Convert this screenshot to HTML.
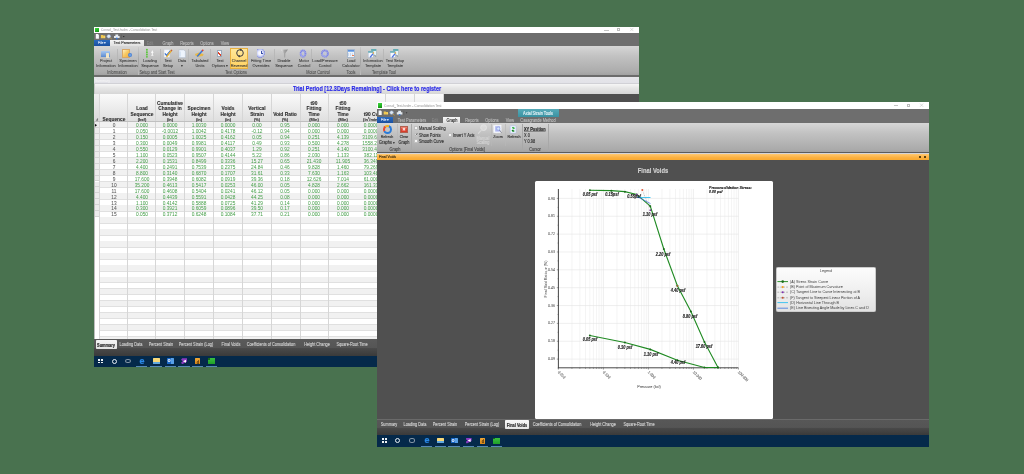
<!DOCTYPE html>
<html><head><meta charset="utf-8">
<style>
*{margin:0;padding:0;box-sizing:border-box}
html,body{width:1024px;height:474px;overflow:hidden;background:#49724f;font-family:"Liberation Sans",sans-serif}
.a{position:absolute}
.t{position:absolute;white-space:nowrap;line-height:1;transform-origin:0 0}
#root{position:absolute;left:0;top:0;width:1024px;height:474px;will-change:transform}
svg{position:absolute;left:0;top:0;overflow:visible}
</style></head><body><div id="root">
<div class="a" style="left:94.00px;top:27.00px;width:545.00px;height:340.00px;background:#4f4f4f"></div>
<div class="a" style="left:94.00px;top:27.00px;width:545.00px;height:6.00px;background:#fff"></div>
<div class="a" style="left:94.60px;top:27.70px;width:4.40px;height:4.40px;background:linear-gradient(160deg,#40d840,#20b020 60%,#108010)"></div>
<div class="t" style="left:100.60px;top:30.10px;font-size:9.75px;color:#a4a4a4;font-weight:normal;transform:scale(0.3333,0.3833) translate(0,-50%);-webkit-text-stroke:0.12px #a4a4a4;">Consol_Test.hvdm - Consolidation Test</div>
<div class="a" style="left:604.00px;top:29.50px;width:4.50px;height:0.40px;background:#c4c4c4"></div>
<div class="a" style="left:616.80px;top:28.00px;width:3.20px;height:3.20px;border:0.4px solid #bcbcbc"></div>
<svg width="1024" height="474"><path d="M630.2,27.9 L633.4,31.1 M633.4,27.9 L630.2,31.1" stroke="#b4b4b4" stroke-width="0.45"/></svg>
<div class="a" style="left:94.00px;top:33.00px;width:545.00px;height:13.00px;background:#6e6e6e"></div>
<svg width="1024" height="474"><g transform="translate(95.6,34.1)"><path d="M0.2,0 L2.4,0 L3.3,0.9 L3.3,4.6 L0.2,4.6Z" fill="#f6f8fa"/><path d="M5.3,1.0 L7.2,1.0 L7.7,1.5 L9.6,1.5 L9.6,4.2 L5.3,4.2Z" fill="#f0c850"/><path d="M8.6,1.8 L10.0,2.9 L8.6,4.0Z" fill="#f8d870"/><circle cx="13.2" cy="2.2" r="1.9" fill="#dce8f4" stroke="#7c90b8" stroke-width="0.5"/><path d="M14.3,3.4 L16.2,5.0" stroke="#c8a040" stroke-width="0.8"/><path d="M19.8,0.4 L22.6,0.4 L22.6,1.8 L24.0,1.8 L24.0,4.0 L18.4,4.0 L18.4,1.8 L19.8,1.8Z" fill="#e4eaf0"/><circle cx="21.2" cy="4.4" r="0.9" fill="#3a7ad8"/><rect x="25.3" y="0.3" width="0.5" height="4.5" fill="#555"/><path d="M27.3,2.0 L29.0,2.0 L28.15,3.1Z" fill="#222"/></g></svg>
<div class="a" style="left:94.00px;top:40.00px;width:15.50px;height:6.00px;background:linear-gradient(#2a6ac0,#1a50a0)"></div>
<div class="t" style="left:101.70px;top:43.20px;font-size:10.20px;color:#e8f0ff;font-weight:normal;transform:scale(0.3333,0.3833) translate(-50%,-50%);-webkit-text-stroke:0.15px #e8f0ff;">File &#9662;</div>
<div class="a" style="left:110.00px;top:40.40px;width:33.80px;height:5.60px;background:linear-gradient(#f4f4f4,#e0e0e0)"></div>
<div class="t" style="left:127.00px;top:43.30px;font-size:11.10px;color:#333;font-weight:normal;transform:scale(0.3333,0.3833) translate(-50%,-50%);-webkit-text-stroke:0.35px #333;">Test Parameters</div>
<div class="t" style="left:150.00px;top:43.30px;font-size:11.70px;color:#8a8a8a;font-weight:normal;transform:scale(0.3333,0.3833) translate(-50%,-50%);-webkit-text-stroke:0.15px #8a8a8a;">Edit</div>
<div class="t" style="left:167.50px;top:43.30px;font-size:11.70px;color:#c4c4c4;font-weight:normal;transform:scale(0.3333,0.3833) translate(-50%,-50%);-webkit-text-stroke:0.15px #c4c4c4;">Graph</div>
<div class="t" style="left:186.50px;top:43.30px;font-size:11.70px;color:#c4c4c4;font-weight:normal;transform:scale(0.3333,0.3833) translate(-50%,-50%);-webkit-text-stroke:0.15px #c4c4c4;">Reports</div>
<div class="t" style="left:206.50px;top:43.30px;font-size:11.70px;color:#c4c4c4;font-weight:normal;transform:scale(0.3333,0.3833) translate(-50%,-50%);-webkit-text-stroke:0.15px #c4c4c4;">Options</div>
<div class="t" style="left:225.00px;top:43.30px;font-size:11.70px;color:#c4c4c4;font-weight:normal;transform:scale(0.3333,0.3833) translate(-50%,-50%);-webkit-text-stroke:0.15px #c4c4c4;">View</div>
<div class="a" style="left:94.00px;top:46.00px;width:545.00px;height:29.00px;background:linear-gradient(#d6d6d6,#c2c2c2 35%,#ababab 90%,#a2a2a2)"></div>
<div class="a" style="left:94.00px;top:75.00px;width:545.00px;height:2.00px;background:#6c6c6c"></div>
<div class="a" style="left:230.00px;top:47.70px;width:18.30px;height:21.20px;background:linear-gradient(#ffe89a,#ffd060);border:0.5px solid #e8b040"></div>
<div class="a" style="left:100.80px;top:50.90px;width:9.30px;height:5.70px;background:linear-gradient(#a8c8f0,#5a8ad0);border-radius:0.5px"></div>
<div class="a" style="left:105.91px;top:53.09px;width:2.79px;height:4.51px;background:#f0e6c8;border-radius:0.5px"></div>
<div class="t" style="left:105.50px;top:61.20px;font-size:11.70px;color:#383838;font-weight:normal;transform:scale(0.3333,0.3600) translate(-50%,-50%);-webkit-text-stroke:0.2px #383838;">Project</div>
<div class="t" style="left:105.50px;top:65.70px;font-size:11.70px;color:#383838;font-weight:normal;transform:scale(0.3333,0.3600) translate(-50%,-50%);-webkit-text-stroke:0.2px #383838;">Information</div>
<div class="a" style="left:122.30px;top:49.40px;width:8.20px;height:8.20px;background:linear-gradient(135deg,#fff0c0,#f8c860 50%,#f0b048);border:0.4px solid #d8a868"></div>
<div class="a" style="left:128.00px;top:53.10px;width:4.00px;height:4.00px;background:radial-gradient(#80b0f0,#2060c0);border-radius:50%"></div>
<div class="t" style="left:127.50px;top:61.20px;font-size:11.70px;color:#383838;font-weight:normal;transform:scale(0.3333,0.3600) translate(-50%,-50%);-webkit-text-stroke:0.2px #383838;">Specimen</div>
<div class="t" style="left:127.50px;top:65.70px;font-size:11.70px;color:#383838;font-weight:normal;transform:scale(0.3333,0.3600) translate(-50%,-50%);-webkit-text-stroke:0.2px #383838;">Information</div>
<svg width="1024" height="474"><path d="M146.90,49.80 V56.90" stroke="#a0b0a0" stroke-width="0.4"/><circle cx="146.90" cy="49.80" r="0.95" fill="#58c838"/><circle cx="146.90" cy="52.15" r="0.95" fill="#58c838"/><circle cx="146.90" cy="54.50" r="0.95" fill="#58c838"/><circle cx="146.90" cy="56.85" r="0.95" fill="#58c838"/><path d="M152.30,50.00 L153.60,53.00 L152.80,53.00 L152.80,55.00 L153.90,55.80 L150.70,55.80 L151.80,55.00 L151.80,53.00 L151.00,53.00Z" fill="#fafafa"/></svg>
<div class="t" style="left:150.00px;top:61.20px;font-size:11.70px;color:#383838;font-weight:normal;transform:scale(0.3333,0.3600) translate(-50%,-50%);-webkit-text-stroke:0.2px #383838;">Loading</div>
<div class="t" style="left:150.00px;top:65.70px;font-size:11.70px;color:#383838;font-weight:normal;transform:scale(0.3333,0.3600) translate(-50%,-50%);-webkit-text-stroke:0.2px #383838;">Sequence</div>
<svg width="1024" height="474"><path d="M164.10,49.70 H169.70 V57.20 H164.10Z" fill="#f8fafc" stroke="#c8d0e0" stroke-width="0.3"/><path d="M164.90,53.40 L166.50,55.40 L170.10,51.00" fill="none" stroke="#2a68d0" stroke-width="1.1"/><path d="M171.90,50.00 L166.50,57.00" stroke="#e8b030" stroke-width="1.3"/><path d="M171.90,50.00 L170.90,51.00" stroke="#c06040" stroke-width="1.3"/></svg>
<div class="t" style="left:168.00px;top:61.20px;font-size:11.70px;color:#383838;font-weight:normal;transform:scale(0.3333,0.3600) translate(-50%,-50%);-webkit-text-stroke:0.2px #383838;">Test</div>
<div class="t" style="left:168.00px;top:65.70px;font-size:11.70px;color:#383838;font-weight:normal;transform:scale(0.3333,0.3600) translate(-50%,-50%);-webkit-text-stroke:0.2px #383838;">Setup</div>
<svg width="1024" height="474"><path d="M179.00,49.90 H183.80 L185.40,51.40 V57.60 H179.00Z" fill="#eef4fc" stroke="#a8b8d0" stroke-width="0.4"/><path d="M180.00,51.40 V56.60" stroke="#c8d8ec" stroke-width="1.2"/></svg>
<div class="t" style="left:182.00px;top:61.20px;font-size:11.70px;color:#383838;font-weight:normal;transform:scale(0.3333,0.3600) translate(-50%,-50%);-webkit-text-stroke:0.2px #383838;">Data</div>
<div class="t" style="left:182.00px;top:65.70px;font-size:11.70px;color:#383838;font-weight:normal;transform:scale(0.3333,0.3600) translate(-50%,-50%);-webkit-text-stroke:0.2px #383838;">&#9662;</div>
<svg width="1024" height="474"><path d="M195.00,53.90 L199.00,52.60 L203.70,54.20 L202.70,56.00 L198.00,56.80 L195.40,55.60Z" fill="#e8b848"/><path d="M197.20,56.40 L202.50,50.60" stroke="#3a78d8" stroke-width="1.5"/><path d="M202.10,51.00 L203.30,49.80" stroke="#e04030" stroke-width="1.5"/></svg>
<div class="t" style="left:199.50px;top:61.20px;font-size:11.70px;color:#383838;font-weight:normal;transform:scale(0.3333,0.3600) translate(-50%,-50%);-webkit-text-stroke:0.2px #383838;">Tabulated</div>
<div class="t" style="left:199.50px;top:65.70px;font-size:11.70px;color:#383838;font-weight:normal;transform:scale(0.3333,0.3600) translate(-50%,-50%);-webkit-text-stroke:0.2px #383838;">Units</div>
<div class="a" style="left:216.80px;top:49.90px;width:5.70px;height:7.20px;background:#f8f8ff;border:0.4px solid #9ab"></div>
<div class="a" style="left:218.30px;top:51.90px;width:3.20px;height:4.20px;background:linear-gradient(225deg,transparent 35%,#e04020 40%,#e04020 60%,transparent 65%)"></div>
<div class="t" style="left:219.50px;top:61.20px;font-size:11.70px;color:#383838;font-weight:normal;transform:scale(0.3333,0.3600) translate(-50%,-50%);-webkit-text-stroke:0.2px #383838;">Test</div>
<div class="t" style="left:219.50px;top:65.70px;font-size:11.70px;color:#383838;font-weight:normal;transform:scale(0.3333,0.3600) translate(-50%,-50%);-webkit-text-stroke:0.2px #383838;">Options &#9662;</div>
<svg width="1024" height="474"><circle cx="240.00" cy="53.00" r="3.3" fill="none" stroke="#30303a" stroke-width="0.95"/><path d="M240.30,48.50 L242.00,49.70 L240.30,50.90Z M239.70,57.50 L238.00,56.30 L239.70,55.10Z" fill="#30303a"/></svg>
<div class="t" style="left:239.00px;top:61.20px;font-size:11.70px;color:#383838;font-weight:normal;transform:scale(0.3333,0.3600) translate(-50%,-50%);-webkit-text-stroke:0.2px #383838;">Channel</div>
<div class="t" style="left:239.00px;top:65.70px;font-size:11.70px;color:#383838;font-weight:normal;transform:scale(0.3333,0.3600) translate(-50%,-50%);-webkit-text-stroke:0.2px #383838;">Reversed</div>
<div class="a" style="left:256.70px;top:48.90px;width:8.60px;height:9.00px;background:radial-gradient(circle at 40% 45%,#ffffff 0%,#eef0ff 30%,#b8c0f0 55%,#8890d8 68%,transparent 71%)"></div>
<div class="a" style="left:260.80px;top:50.60px;width:0.70px;height:3.20px;background:#3a50a8"></div>
<div class="a" style="left:260.80px;top:53.20px;width:2.40px;height:0.70px;background:#3a50a8"></div>
<div class="t" style="left:261.00px;top:61.20px;font-size:11.70px;color:#383838;font-weight:normal;transform:scale(0.3333,0.3600) translate(-50%,-50%);-webkit-text-stroke:0.2px #383838;">Fitting Time</div>
<div class="t" style="left:261.00px;top:65.70px;font-size:11.70px;color:#383838;font-weight:normal;transform:scale(0.3333,0.3600) translate(-50%,-50%);-webkit-text-stroke:0.2px #383838;">Overrides</div>
<div class="a" style="left:281.00px;top:49.40px;width:7.00px;height:8.20px;background:linear-gradient(90deg,#f4f4f4,#a8a8a8 45%,#888 100%);clip-path:polygon(0 5%,100% 0,62% 48%,60% 100%,42% 100%,40% 48%)"></div>
<div class="t" style="left:284.00px;top:61.20px;font-size:11.70px;color:#383838;font-weight:normal;transform:scale(0.3333,0.3600) translate(-50%,-50%);-webkit-text-stroke:0.2px #383838;">Disable</div>
<div class="t" style="left:284.00px;top:65.70px;font-size:11.70px;color:#383838;font-weight:normal;transform:scale(0.3333,0.3600) translate(-50%,-50%);-webkit-text-stroke:0.2px #383838;">Sequence</div>
<svg width="1024" height="474"><ellipse cx="303.05" cy="53.50" rx="2.35" ry="3.10" fill="none" stroke="#7c84ec" stroke-width="2.0" stroke-dasharray="1.1,0.35"/><ellipse cx="302.55" cy="54.30" rx="1.6" ry="2.2" fill="none" stroke="#b8c4ff" stroke-width="0.6" opacity="0.8"/></svg>
<div class="t" style="left:303.50px;top:61.20px;font-size:11.70px;color:#383838;font-weight:normal;transform:scale(0.3333,0.3600) translate(-50%,-50%);-webkit-text-stroke:0.2px #383838;">Motor</div>
<div class="t" style="left:303.50px;top:65.70px;font-size:11.70px;color:#383838;font-weight:normal;transform:scale(0.3333,0.3600) translate(-50%,-50%);-webkit-text-stroke:0.2px #383838;">Control</div>
<svg width="1024" height="474"><ellipse cx="324.90" cy="53.50" rx="3.00" ry="3.10" fill="none" stroke="#7c84ec" stroke-width="2.0" stroke-dasharray="1.1,0.35"/><ellipse cx="324.40" cy="54.30" rx="1.6" ry="2.2" fill="none" stroke="#b8c4ff" stroke-width="0.6" opacity="0.8"/></svg>
<div class="t" style="left:325.00px;top:61.20px;font-size:11.70px;color:#383838;font-weight:normal;transform:scale(0.3333,0.3600) translate(-50%,-50%);-webkit-text-stroke:0.2px #383838;">Load/Pressure</div>
<div class="t" style="left:325.00px;top:65.70px;font-size:11.70px;color:#383838;font-weight:normal;transform:scale(0.3333,0.3600) translate(-50%,-50%);-webkit-text-stroke:0.2px #383838;">Control</div>
<div class="a" style="left:346.50px;top:49.40px;width:8.00px;height:8.20px;background:linear-gradient(#4a80d8 0,#8ab8f0 24%,#eef2f8 25%);border:0.4px solid #a8b8cc;border-radius:0.6px"></div>
<div class="a" style="left:348.00px;top:52.90px;width:5.00px;height:3.20px;background:repeating-linear-gradient(90deg,#c8d8f0 0 1px,transparent 1px 2px)"></div>
<div class="a" style="left:352.00px;top:54.60px;width:1.50px;height:1.50px;background:#f08050"></div>
<div class="t" style="left:350.50px;top:61.20px;font-size:11.70px;color:#383838;font-weight:normal;transform:scale(0.3333,0.3600) translate(-50%,-50%);-webkit-text-stroke:0.2px #383838;">Load</div>
<div class="t" style="left:350.50px;top:65.70px;font-size:11.70px;color:#383838;font-weight:normal;transform:scale(0.3333,0.3600) translate(-50%,-50%);-webkit-text-stroke:0.2px #383838;">Calculator</div>
<svg width="1024" height="474"><rect x="371.20" y="49.20" width="5" height="6" fill="#e8f4f4" stroke="#80a8b0" stroke-width="0.3"/><rect x="371.20" y="49.20" width="5" height="1.6" fill="#4aa0a8"/><rect x="368.20" y="51.20" width="5" height="6.2" fill="#f4f8ff" stroke="#90a0c0" stroke-width="0.3"/><rect x="368.20" y="51.20" width="5" height="1.5" fill="#5aa8b0"/><path d="M369.60,57.00 L372.60,53.20 L373.60,54.00 L370.60,57.80Z" fill="#4a70e0"/><circle cx="373.40" cy="53.00" r="0.8" fill="#f0a020"/><path d="M374.00,54.40 L376.00,56.90" stroke="#607080" stroke-width="0.5"/></svg>
<div class="t" style="left:372.50px;top:61.20px;font-size:11.70px;color:#383838;font-weight:normal;transform:scale(0.3333,0.3600) translate(-50%,-50%);-webkit-text-stroke:0.2px #383838;">Information</div>
<div class="t" style="left:372.50px;top:65.70px;font-size:11.70px;color:#383838;font-weight:normal;transform:scale(0.3333,0.3600) translate(-50%,-50%);-webkit-text-stroke:0.2px #383838;">Template</div>
<svg width="1024" height="474"><rect x="393.20" y="49.20" width="5" height="6" fill="#e8f4f4" stroke="#80a8b0" stroke-width="0.3"/><rect x="393.20" y="49.20" width="5" height="1.6" fill="#4aa0a8"/><rect x="390.20" y="51.20" width="5" height="6.2" fill="#f4f8ff" stroke="#90a0c0" stroke-width="0.3"/><rect x="390.20" y="51.20" width="5" height="1.5" fill="#5aa8b0"/><path d="M391.60,57.00 L394.60,53.20 L395.60,54.00 L392.60,57.80Z" fill="#4a70e0"/><circle cx="395.40" cy="53.00" r="0.8" fill="#f0a020"/><path d="M396.00,54.40 L398.00,56.90" stroke="#607080" stroke-width="0.5"/></svg>
<div class="t" style="left:394.50px;top:61.20px;font-size:11.70px;color:#383838;font-weight:normal;transform:scale(0.3333,0.3600) translate(-50%,-50%);-webkit-text-stroke:0.2px #383838;">Test Setup</div>
<div class="t" style="left:394.50px;top:65.70px;font-size:11.70px;color:#383838;font-weight:normal;transform:scale(0.3333,0.3600) translate(-50%,-50%);-webkit-text-stroke:0.2px #383838;">Template</div>
<div class="a" style="left:138.40px;top:47.00px;width:0.60px;height:27.50px;background:linear-gradient(#c8c8c8,#a0a0a0 50%,#c0c0c0);opacity:0.9"></div>
<div class="a" style="left:174.60px;top:47.00px;width:0.60px;height:27.50px;background:linear-gradient(#c8c8c8,#a0a0a0 50%,#c0c0c0);opacity:0.9"></div>
<div class="a" style="left:294.50px;top:47.00px;width:0.60px;height:27.50px;background:linear-gradient(#c8c8c8,#a0a0a0 50%,#c0c0c0);opacity:0.9"></div>
<div class="a" style="left:339.70px;top:47.00px;width:0.60px;height:27.50px;background:linear-gradient(#c8c8c8,#a0a0a0 50%,#c0c0c0);opacity:0.9"></div>
<div class="a" style="left:360.20px;top:47.00px;width:0.60px;height:27.50px;background:linear-gradient(#c8c8c8,#a0a0a0 50%,#c0c0c0);opacity:0.9"></div>
<div class="a" style="left:405.90px;top:47.00px;width:0.60px;height:27.50px;background:linear-gradient(#c8c8c8,#a0a0a0 50%,#c0c0c0);opacity:0.9"></div>
<div class="a" style="left:116.50px;top:48.50px;width:0.50px;height:19.50px;background:#b4b4b4;opacity:0.8"></div>
<div class="a" style="left:160.40px;top:48.50px;width:0.50px;height:19.50px;background:#b4b4b4;opacity:0.8"></div>
<div class="a" style="left:188.20px;top:48.50px;width:0.50px;height:19.50px;background:#b4b4b4;opacity:0.8"></div>
<div class="a" style="left:210.00px;top:48.50px;width:0.50px;height:19.50px;background:#b4b4b4;opacity:0.8"></div>
<div class="a" style="left:273.50px;top:48.50px;width:0.50px;height:19.50px;background:#b4b4b4;opacity:0.8"></div>
<div class="a" style="left:310.60px;top:48.50px;width:0.50px;height:19.50px;background:#b4b4b4;opacity:0.8"></div>
<div class="a" style="left:383.40px;top:48.50px;width:0.50px;height:19.50px;background:#b4b4b4;opacity:0.8"></div>
<div class="t" style="left:116.50px;top:72.00px;font-size:11.70px;color:#4e4e4e;font-weight:normal;transform:scale(0.3333,0.3833) translate(-50%,-50%);-webkit-text-stroke:0.15px #4e4e4e;">Information</div>
<div class="t" style="left:157.00px;top:72.00px;font-size:11.70px;color:#4e4e4e;font-weight:normal;transform:scale(0.3333,0.3833) translate(-50%,-50%);-webkit-text-stroke:0.15px #4e4e4e;">Setup and Start Test</div>
<div class="t" style="left:235.50px;top:72.00px;font-size:11.70px;color:#4e4e4e;font-weight:normal;transform:scale(0.3333,0.3833) translate(-50%,-50%);-webkit-text-stroke:0.15px #4e4e4e;">Test Options</div>
<div class="t" style="left:317.50px;top:72.00px;font-size:11.70px;color:#4e4e4e;font-weight:normal;transform:scale(0.3333,0.3833) translate(-50%,-50%);-webkit-text-stroke:0.15px #4e4e4e;">Motor Control</div>
<div class="t" style="left:350.50px;top:72.00px;font-size:11.70px;color:#4e4e4e;font-weight:normal;transform:scale(0.3333,0.3833) translate(-50%,-50%);-webkit-text-stroke:0.15px #4e4e4e;">Tools</div>
<div class="t" style="left:384.00px;top:72.00px;font-size:11.70px;color:#4e4e4e;font-weight:normal;transform:scale(0.3333,0.3833) translate(-50%,-50%);-webkit-text-stroke:0.15px #4e4e4e;">Template Tool</div>
<div class="a" style="left:94.00px;top:77.00px;width:545.00px;height:6.80px;background:linear-gradient(#e6e6ea,#e2e2e8 80%,#c8c8cc)"></div>
<div class="t" style="left:95.30px;top:80.60px;font-size:10.50px;color:#f8f8f8;font-weight:normal;transform:scale(0.3333,0.3833) translate(0,-50%);">Summary</div>
<div class="a" style="left:94.00px;top:83.80px;width:545.00px;height:10.20px;background:linear-gradient(#f6f6f6,#e6e6e6 40%,#d6d6d6);border-left:1px solid #c8c8c8"></div>
<div class="t" style="left:367.00px;top:89.20px;font-size:16.50px;color:#2626e8;font-weight:bold;transform:scale(0.3333,0.3833) translate(-50%,-50%);-webkit-text-stroke:0.35px #2626e8;">Trial Period [12.3Days Remaining] - Click here to register</div>
<div class="a" style="left:443.00px;top:94.00px;width:196.00px;height:245.40px;background:#4f4f4f"></div>
<div class="a" style="left:94.00px;top:94.00px;width:349.00px;height:245.40px;background:#fff"></div>
<div class="a" style="left:94.00px;top:94.00px;width:349.00px;height:27.80px;background:linear-gradient(#fafafa,#ececec 50%,#dedede)"></div>
<div class="a" style="left:94.00px;top:94.00px;width:5.50px;height:27.80px;background:linear-gradient(#f0f0f0,#d8d8d8)"></div>
<div class="a" style="left:99.50px;top:121.80px;width:343.50px;height:5.97px;background:#f1f1f1"></div>
<div class="a" style="left:99.50px;top:127.27px;width:343.50px;height:0.50px;background:#e0e0e0"></div>
<div class="a" style="left:94.00px;top:121.80px;width:5.50px;height:5.97px;background:#ececec;border-bottom:0.5px solid #d4d4d4"></div>
<div class="a" style="left:99.50px;top:133.24px;width:343.50px;height:0.50px;background:#e0e0e0"></div>
<div class="a" style="left:94.00px;top:127.77px;width:5.50px;height:5.97px;background:#ececec;border-bottom:0.5px solid #d4d4d4"></div>
<div class="a" style="left:99.50px;top:133.74px;width:343.50px;height:5.97px;background:#f1f1f1"></div>
<div class="a" style="left:99.50px;top:139.21px;width:343.50px;height:0.50px;background:#e0e0e0"></div>
<div class="a" style="left:94.00px;top:133.74px;width:5.50px;height:5.97px;background:#ececec;border-bottom:0.5px solid #d4d4d4"></div>
<div class="a" style="left:99.50px;top:145.18px;width:343.50px;height:0.50px;background:#e0e0e0"></div>
<div class="a" style="left:94.00px;top:139.71px;width:5.50px;height:5.97px;background:#ececec;border-bottom:0.5px solid #d4d4d4"></div>
<div class="a" style="left:99.50px;top:145.68px;width:343.50px;height:5.97px;background:#f1f1f1"></div>
<div class="a" style="left:99.50px;top:151.15px;width:343.50px;height:0.50px;background:#e0e0e0"></div>
<div class="a" style="left:94.00px;top:145.68px;width:5.50px;height:5.97px;background:#ececec;border-bottom:0.5px solid #d4d4d4"></div>
<div class="a" style="left:99.50px;top:157.12px;width:343.50px;height:0.50px;background:#e0e0e0"></div>
<div class="a" style="left:94.00px;top:151.65px;width:5.50px;height:5.97px;background:#ececec;border-bottom:0.5px solid #d4d4d4"></div>
<div class="a" style="left:99.50px;top:157.62px;width:343.50px;height:5.97px;background:#f1f1f1"></div>
<div class="a" style="left:99.50px;top:163.09px;width:343.50px;height:0.50px;background:#e0e0e0"></div>
<div class="a" style="left:94.00px;top:157.62px;width:5.50px;height:5.97px;background:#ececec;border-bottom:0.5px solid #d4d4d4"></div>
<div class="a" style="left:99.50px;top:169.06px;width:343.50px;height:0.50px;background:#e0e0e0"></div>
<div class="a" style="left:94.00px;top:163.59px;width:5.50px;height:5.97px;background:#ececec;border-bottom:0.5px solid #d4d4d4"></div>
<div class="a" style="left:99.50px;top:169.56px;width:343.50px;height:5.97px;background:#f1f1f1"></div>
<div class="a" style="left:99.50px;top:175.03px;width:343.50px;height:0.50px;background:#e0e0e0"></div>
<div class="a" style="left:94.00px;top:169.56px;width:5.50px;height:5.97px;background:#ececec;border-bottom:0.5px solid #d4d4d4"></div>
<div class="a" style="left:99.50px;top:181.00px;width:343.50px;height:0.50px;background:#e0e0e0"></div>
<div class="a" style="left:94.00px;top:175.53px;width:5.50px;height:5.97px;background:#ececec;border-bottom:0.5px solid #d4d4d4"></div>
<div class="a" style="left:99.50px;top:181.50px;width:343.50px;height:5.97px;background:#f1f1f1"></div>
<div class="a" style="left:99.50px;top:186.97px;width:343.50px;height:0.50px;background:#e0e0e0"></div>
<div class="a" style="left:94.00px;top:181.50px;width:5.50px;height:5.97px;background:#ececec;border-bottom:0.5px solid #d4d4d4"></div>
<div class="a" style="left:99.50px;top:192.94px;width:343.50px;height:0.50px;background:#e0e0e0"></div>
<div class="a" style="left:94.00px;top:187.47px;width:5.50px;height:5.97px;background:#ececec;border-bottom:0.5px solid #d4d4d4"></div>
<div class="a" style="left:99.50px;top:193.44px;width:343.50px;height:5.97px;background:#f1f1f1"></div>
<div class="a" style="left:99.50px;top:198.91px;width:343.50px;height:0.50px;background:#e0e0e0"></div>
<div class="a" style="left:94.00px;top:193.44px;width:5.50px;height:5.97px;background:#ececec;border-bottom:0.5px solid #d4d4d4"></div>
<div class="a" style="left:99.50px;top:204.88px;width:343.50px;height:0.50px;background:#e0e0e0"></div>
<div class="a" style="left:94.00px;top:199.41px;width:5.50px;height:5.97px;background:#ececec;border-bottom:0.5px solid #d4d4d4"></div>
<div class="a" style="left:99.50px;top:205.38px;width:343.50px;height:5.97px;background:#f1f1f1"></div>
<div class="a" style="left:99.50px;top:210.85px;width:343.50px;height:0.50px;background:#e0e0e0"></div>
<div class="a" style="left:94.00px;top:205.38px;width:5.50px;height:5.97px;background:#ececec;border-bottom:0.5px solid #d4d4d4"></div>
<div class="a" style="left:99.50px;top:216.82px;width:343.50px;height:0.50px;background:#e0e0e0"></div>
<div class="a" style="left:94.00px;top:211.35px;width:5.50px;height:5.97px;background:#ececec;border-bottom:0.5px solid #d4d4d4"></div>
<div class="a" style="left:99.50px;top:217.32px;width:343.50px;height:5.97px;background:#f1f1f1"></div>
<div class="a" style="left:99.50px;top:222.79px;width:343.50px;height:0.50px;background:#e0e0e0"></div>
<div class="a" style="left:99.50px;top:228.76px;width:343.50px;height:0.50px;background:#e0e0e0"></div>
<div class="a" style="left:99.50px;top:229.26px;width:343.50px;height:5.97px;background:#f1f1f1"></div>
<div class="a" style="left:99.50px;top:234.73px;width:343.50px;height:0.50px;background:#e0e0e0"></div>
<div class="a" style="left:99.50px;top:240.70px;width:343.50px;height:0.50px;background:#e0e0e0"></div>
<div class="a" style="left:99.50px;top:241.20px;width:343.50px;height:5.97px;background:#f1f1f1"></div>
<div class="a" style="left:99.50px;top:246.67px;width:343.50px;height:0.50px;background:#e0e0e0"></div>
<div class="a" style="left:99.50px;top:252.64px;width:343.50px;height:0.50px;background:#e0e0e0"></div>
<div class="a" style="left:99.50px;top:253.14px;width:343.50px;height:5.97px;background:#f1f1f1"></div>
<div class="a" style="left:99.50px;top:258.61px;width:343.50px;height:0.50px;background:#e0e0e0"></div>
<div class="a" style="left:99.50px;top:264.58px;width:343.50px;height:0.50px;background:#e0e0e0"></div>
<div class="a" style="left:99.50px;top:265.08px;width:343.50px;height:5.97px;background:#f1f1f1"></div>
<div class="a" style="left:99.50px;top:270.55px;width:343.50px;height:0.50px;background:#e0e0e0"></div>
<div class="a" style="left:99.50px;top:276.52px;width:343.50px;height:0.50px;background:#e0e0e0"></div>
<div class="a" style="left:99.50px;top:277.02px;width:343.50px;height:5.97px;background:#f1f1f1"></div>
<div class="a" style="left:99.50px;top:282.49px;width:343.50px;height:0.50px;background:#e0e0e0"></div>
<div class="a" style="left:99.50px;top:288.46px;width:343.50px;height:0.50px;background:#e0e0e0"></div>
<div class="a" style="left:99.50px;top:288.96px;width:343.50px;height:5.97px;background:#f1f1f1"></div>
<div class="a" style="left:99.50px;top:294.43px;width:343.50px;height:0.50px;background:#e0e0e0"></div>
<div class="a" style="left:99.50px;top:300.40px;width:343.50px;height:0.50px;background:#e0e0e0"></div>
<div class="a" style="left:99.50px;top:300.90px;width:343.50px;height:5.97px;background:#f1f1f1"></div>
<div class="a" style="left:99.50px;top:306.37px;width:343.50px;height:0.50px;background:#e0e0e0"></div>
<div class="a" style="left:99.50px;top:312.34px;width:343.50px;height:0.50px;background:#e0e0e0"></div>
<div class="a" style="left:99.50px;top:312.84px;width:343.50px;height:5.97px;background:#f1f1f1"></div>
<div class="a" style="left:99.50px;top:318.31px;width:343.50px;height:0.50px;background:#e0e0e0"></div>
<div class="a" style="left:99.50px;top:324.28px;width:343.50px;height:0.50px;background:#e0e0e0"></div>
<div class="a" style="left:99.50px;top:324.78px;width:343.50px;height:5.97px;background:#f1f1f1"></div>
<div class="a" style="left:99.50px;top:330.25px;width:343.50px;height:0.50px;background:#e0e0e0"></div>
<div class="a" style="left:99.50px;top:336.22px;width:343.50px;height:0.50px;background:#e0e0e0"></div>
<div class="a" style="left:99.50px;top:336.72px;width:343.50px;height:2.68px;background:#f1f1f1"></div>
<div class="a" style="left:99.50px;top:338.90px;width:343.50px;height:0.50px;background:#e0e0e0"></div>
<div class="a" style="left:94.00px;top:121.80px;width:1.00px;height:217.60px;background:#bdbdbd"></div>
<div class="a" style="left:99.20px;top:94.00px;width:0.60px;height:245.40px;background:#d6d6d6"></div>
<div class="a" style="left:127.20px;top:94.00px;width:0.60px;height:245.40px;background:#d6d6d6"></div>
<div class="a" style="left:155.20px;top:94.00px;width:0.60px;height:245.40px;background:#d6d6d6"></div>
<div class="a" style="left:184.20px;top:94.00px;width:0.60px;height:245.40px;background:#d6d6d6"></div>
<div class="a" style="left:213.20px;top:94.00px;width:0.60px;height:245.40px;background:#d6d6d6"></div>
<div class="a" style="left:242.20px;top:94.00px;width:0.60px;height:245.40px;background:#d6d6d6"></div>
<div class="a" style="left:270.50px;top:94.00px;width:0.60px;height:245.40px;background:#d6d6d6"></div>
<div class="a" style="left:299.60px;top:94.00px;width:0.60px;height:245.40px;background:#d6d6d6"></div>
<div class="a" style="left:328.30px;top:94.00px;width:0.60px;height:245.40px;background:#d6d6d6"></div>
<div class="a" style="left:385.30px;top:94.00px;width:0.60px;height:245.40px;background:#d6d6d6"></div>
<div class="a" style="left:413.60px;top:94.00px;width:0.60px;height:245.40px;background:#d6d6d6"></div>
<div class="a" style="left:442.70px;top:94.00px;width:0.60px;height:245.40px;background:#d6d6d6"></div>
<div class="a" style="left:94.00px;top:121.40px;width:349.00px;height:0.80px;background:#c0c0c0"></div>
<div class="t" style="left:113.50px;top:119.00px;font-size:14.55px;color:#2e2e2e;font-weight:bold;transform:scale(0.3333,0.3600) translate(-50%,-50%);-webkit-text-stroke:0.3px #2e2e2e;">Sequence</div>
<div class="t" style="left:141.50px;top:108.40px;font-size:14.55px;color:#2e2e2e;font-weight:bold;transform:scale(0.3333,0.3600) translate(-50%,-50%);-webkit-text-stroke:0.3px #2e2e2e;">Load</div>
<div class="t" style="left:141.50px;top:113.70px;font-size:14.55px;color:#2e2e2e;font-weight:bold;transform:scale(0.3333,0.3600) translate(-50%,-50%);-webkit-text-stroke:0.3px #2e2e2e;">Sequence</div>
<div class="t" style="left:141.50px;top:119.50px;font-size:12.00px;color:#2e2e2e;font-weight:bold;transform:scale(0.3333,0.3333) translate(-50%,-50%);-webkit-text-stroke:0.25px #2e2e2e;">(ksf)</div>
<div class="t" style="left:170.00px;top:103.10px;font-size:14.55px;color:#2e2e2e;font-weight:bold;transform:scale(0.3333,0.3600) translate(-50%,-50%);-webkit-text-stroke:0.3px #2e2e2e;">Cumulative</div>
<div class="t" style="left:170.00px;top:108.40px;font-size:14.55px;color:#2e2e2e;font-weight:bold;transform:scale(0.3333,0.3600) translate(-50%,-50%);-webkit-text-stroke:0.3px #2e2e2e;">Change in</div>
<div class="t" style="left:170.00px;top:113.70px;font-size:14.55px;color:#2e2e2e;font-weight:bold;transform:scale(0.3333,0.3600) translate(-50%,-50%);-webkit-text-stroke:0.3px #2e2e2e;">Height</div>
<div class="t" style="left:170.00px;top:119.50px;font-size:12.00px;color:#2e2e2e;font-weight:bold;transform:scale(0.3333,0.3333) translate(-50%,-50%);-webkit-text-stroke:0.25px #2e2e2e;">(in)</div>
<div class="t" style="left:199.00px;top:108.40px;font-size:14.55px;color:#2e2e2e;font-weight:bold;transform:scale(0.3333,0.3600) translate(-50%,-50%);-webkit-text-stroke:0.3px #2e2e2e;">Specimen</div>
<div class="t" style="left:199.00px;top:113.70px;font-size:14.55px;color:#2e2e2e;font-weight:bold;transform:scale(0.3333,0.3600) translate(-50%,-50%);-webkit-text-stroke:0.3px #2e2e2e;">Height</div>
<div class="t" style="left:199.00px;top:119.50px;font-size:12.00px;color:#2e2e2e;font-weight:bold;transform:scale(0.3333,0.3333) translate(-50%,-50%);-webkit-text-stroke:0.25px #2e2e2e;">(in)</div>
<div class="t" style="left:228.00px;top:108.40px;font-size:14.55px;color:#2e2e2e;font-weight:bold;transform:scale(0.3333,0.3600) translate(-50%,-50%);-webkit-text-stroke:0.3px #2e2e2e;">Voids</div>
<div class="t" style="left:228.00px;top:113.70px;font-size:14.55px;color:#2e2e2e;font-weight:bold;transform:scale(0.3333,0.3600) translate(-50%,-50%);-webkit-text-stroke:0.3px #2e2e2e;">Height</div>
<div class="t" style="left:228.00px;top:119.50px;font-size:12.00px;color:#2e2e2e;font-weight:bold;transform:scale(0.3333,0.3333) translate(-50%,-50%);-webkit-text-stroke:0.25px #2e2e2e;">(in)</div>
<div class="t" style="left:256.65px;top:108.40px;font-size:14.55px;color:#2e2e2e;font-weight:bold;transform:scale(0.3333,0.3600) translate(-50%,-50%);-webkit-text-stroke:0.3px #2e2e2e;">Vertical</div>
<div class="t" style="left:256.65px;top:113.70px;font-size:14.55px;color:#2e2e2e;font-weight:bold;transform:scale(0.3333,0.3600) translate(-50%,-50%);-webkit-text-stroke:0.3px #2e2e2e;">Strain</div>
<div class="t" style="left:256.65px;top:119.50px;font-size:12.00px;color:#2e2e2e;font-weight:bold;transform:scale(0.3333,0.3333) translate(-50%,-50%);-webkit-text-stroke:0.25px #2e2e2e;">(%)</div>
<div class="t" style="left:285.35px;top:113.70px;font-size:14.55px;color:#2e2e2e;font-weight:bold;transform:scale(0.3333,0.3600) translate(-50%,-50%);-webkit-text-stroke:0.3px #2e2e2e;">Void Ratio</div>
<div class="t" style="left:285.35px;top:119.50px;font-size:12.00px;color:#2e2e2e;font-weight:bold;transform:scale(0.3333,0.3333) translate(-50%,-50%);-webkit-text-stroke:0.25px #2e2e2e;">(%)</div>
<div class="t" style="left:314.25px;top:103.10px;font-size:14.55px;color:#2e2e2e;font-weight:bold;transform:scale(0.3333,0.3600) translate(-50%,-50%);-webkit-text-stroke:0.3px #2e2e2e;">t90</div>
<div class="t" style="left:314.25px;top:108.40px;font-size:14.55px;color:#2e2e2e;font-weight:bold;transform:scale(0.3333,0.3600) translate(-50%,-50%);-webkit-text-stroke:0.3px #2e2e2e;">Fitting</div>
<div class="t" style="left:314.25px;top:113.70px;font-size:14.55px;color:#2e2e2e;font-weight:bold;transform:scale(0.3333,0.3600) translate(-50%,-50%);-webkit-text-stroke:0.3px #2e2e2e;">Time</div>
<div class="t" style="left:314.25px;top:119.50px;font-size:12.00px;color:#2e2e2e;font-weight:bold;transform:scale(0.3333,0.3333) translate(-50%,-50%);-webkit-text-stroke:0.25px #2e2e2e;">(Min)</div>
<div class="t" style="left:342.80px;top:103.10px;font-size:14.55px;color:#2e2e2e;font-weight:bold;transform:scale(0.3333,0.3600) translate(-50%,-50%);-webkit-text-stroke:0.3px #2e2e2e;">t50</div>
<div class="t" style="left:342.80px;top:108.40px;font-size:14.55px;color:#2e2e2e;font-weight:bold;transform:scale(0.3333,0.3600) translate(-50%,-50%);-webkit-text-stroke:0.3px #2e2e2e;">Fitting</div>
<div class="t" style="left:342.80px;top:113.70px;font-size:14.55px;color:#2e2e2e;font-weight:bold;transform:scale(0.3333,0.3600) translate(-50%,-50%);-webkit-text-stroke:0.3px #2e2e2e;">Time</div>
<div class="t" style="left:342.80px;top:119.50px;font-size:12.00px;color:#2e2e2e;font-weight:bold;transform:scale(0.3333,0.3333) translate(-50%,-50%);-webkit-text-stroke:0.25px #2e2e2e;">(Min)</div>
<div class="t" style="left:371.00px;top:113.70px;font-size:14.55px;color:#2e2e2e;font-weight:bold;transform:scale(0.3333,0.3600) translate(-50%,-50%);-webkit-text-stroke:0.3px #2e2e2e;">t90 Cv</div>
<div class="t" style="left:371.00px;top:119.50px;font-size:12.00px;color:#2e2e2e;font-weight:bold;transform:scale(0.3333,0.3333) translate(-50%,-50%);-webkit-text-stroke:0.25px #2e2e2e;">(in&#178;/min)</div>
<div class="t" style="left:96.60px;top:119.30px;font-size:8.40px;color:#777;font-weight:normal;transform:scale(0.3333,0.3833) translate(-50%,-50%);-webkit-text-stroke:0.35px #777;">&#9698;</div>
<div class="t" style="left:95.60px;top:124.60px;font-size:9.00px;color:#111;font-weight:normal;transform:scale(0.3333,0.3833) translate(-50%,-50%);-webkit-text-stroke:0.35px #111;">&#9654;</div>
<div class="t" style="left:113.50px;top:124.88px;font-size:14.40px;color:#5a5a5a;font-weight:normal;transform:scale(0.3333,0.3533) translate(-50%,-50%);-webkit-text-stroke:0.18px #5a5a5a;">0</div>
<div class="t" style="left:141.50px;top:124.88px;font-size:14.40px;color:#48a04c;font-weight:normal;transform:scale(0.3333,0.3533) translate(-50%,-50%);-webkit-text-stroke:0.04px #48a04c;">0.000</div>
<div class="t" style="left:170.00px;top:124.88px;font-size:14.40px;color:#48a04c;font-weight:normal;transform:scale(0.3333,0.3533) translate(-50%,-50%);-webkit-text-stroke:0.04px #48a04c;">0.0000</div>
<div class="t" style="left:199.00px;top:124.88px;font-size:14.40px;color:#48a04c;font-weight:normal;transform:scale(0.3333,0.3533) translate(-50%,-50%);-webkit-text-stroke:0.04px #48a04c;">1.0030</div>
<div class="t" style="left:228.00px;top:124.88px;font-size:14.40px;color:#48a04c;font-weight:normal;transform:scale(0.3333,0.3533) translate(-50%,-50%);-webkit-text-stroke:0.04px #48a04c;">0.0000</div>
<div class="t" style="left:256.65px;top:124.88px;font-size:14.40px;color:#48a04c;font-weight:normal;transform:scale(0.3333,0.3533) translate(-50%,-50%);-webkit-text-stroke:0.04px #48a04c;">0.00</div>
<div class="t" style="left:285.35px;top:124.88px;font-size:14.40px;color:#48a04c;font-weight:normal;transform:scale(0.3333,0.3533) translate(-50%,-50%);-webkit-text-stroke:0.04px #48a04c;">0.95</div>
<div class="t" style="left:314.25px;top:124.88px;font-size:14.40px;color:#48a04c;font-weight:normal;transform:scale(0.3333,0.3533) translate(-50%,-50%);-webkit-text-stroke:0.04px #48a04c;">0.000</div>
<div class="t" style="left:342.80px;top:124.88px;font-size:14.40px;color:#48a04c;font-weight:normal;transform:scale(0.3333,0.3533) translate(-50%,-50%);-webkit-text-stroke:0.04px #48a04c;">0.000</div>
<div class="t" style="left:371.00px;top:124.88px;font-size:14.40px;color:#48a04c;font-weight:normal;transform:scale(0.3333,0.3533) translate(-50%,-50%);-webkit-text-stroke:0.04px #48a04c;">0.0000</div>
<div class="t" style="left:113.50px;top:130.85px;font-size:14.40px;color:#5a5a5a;font-weight:normal;transform:scale(0.3333,0.3533) translate(-50%,-50%);-webkit-text-stroke:0.18px #5a5a5a;">1</div>
<div class="t" style="left:141.50px;top:130.85px;font-size:14.40px;color:#48a04c;font-weight:normal;transform:scale(0.3333,0.3533) translate(-50%,-50%);-webkit-text-stroke:0.04px #48a04c;">0.050</div>
<div class="t" style="left:170.00px;top:130.85px;font-size:14.40px;color:#48a04c;font-weight:normal;transform:scale(0.3333,0.3533) translate(-50%,-50%);-webkit-text-stroke:0.04px #48a04c;">-0.0012</div>
<div class="t" style="left:199.00px;top:130.85px;font-size:14.40px;color:#48a04c;font-weight:normal;transform:scale(0.3333,0.3533) translate(-50%,-50%);-webkit-text-stroke:0.04px #48a04c;">1.0042</div>
<div class="t" style="left:228.00px;top:130.85px;font-size:14.40px;color:#48a04c;font-weight:normal;transform:scale(0.3333,0.3533) translate(-50%,-50%);-webkit-text-stroke:0.04px #48a04c;">0.4178</div>
<div class="t" style="left:256.65px;top:130.85px;font-size:14.40px;color:#48a04c;font-weight:normal;transform:scale(0.3333,0.3533) translate(-50%,-50%);-webkit-text-stroke:0.04px #48a04c;">-0.12</div>
<div class="t" style="left:285.35px;top:130.85px;font-size:14.40px;color:#48a04c;font-weight:normal;transform:scale(0.3333,0.3533) translate(-50%,-50%);-webkit-text-stroke:0.04px #48a04c;">0.94</div>
<div class="t" style="left:314.25px;top:130.85px;font-size:14.40px;color:#48a04c;font-weight:normal;transform:scale(0.3333,0.3533) translate(-50%,-50%);-webkit-text-stroke:0.04px #48a04c;">0.000</div>
<div class="t" style="left:342.80px;top:130.85px;font-size:14.40px;color:#48a04c;font-weight:normal;transform:scale(0.3333,0.3533) translate(-50%,-50%);-webkit-text-stroke:0.04px #48a04c;">0.000</div>
<div class="t" style="left:371.00px;top:130.85px;font-size:14.40px;color:#48a04c;font-weight:normal;transform:scale(0.3333,0.3533) translate(-50%,-50%);-webkit-text-stroke:0.04px #48a04c;">0.0000</div>
<div class="t" style="left:113.50px;top:136.83px;font-size:14.40px;color:#5a5a5a;font-weight:normal;transform:scale(0.3333,0.3533) translate(-50%,-50%);-webkit-text-stroke:0.18px #5a5a5a;">2</div>
<div class="t" style="left:141.50px;top:136.83px;font-size:14.40px;color:#48a04c;font-weight:normal;transform:scale(0.3333,0.3533) translate(-50%,-50%);-webkit-text-stroke:0.04px #48a04c;">0.150</div>
<div class="t" style="left:170.00px;top:136.83px;font-size:14.40px;color:#48a04c;font-weight:normal;transform:scale(0.3333,0.3533) translate(-50%,-50%);-webkit-text-stroke:0.04px #48a04c;">0.0005</div>
<div class="t" style="left:199.00px;top:136.83px;font-size:14.40px;color:#48a04c;font-weight:normal;transform:scale(0.3333,0.3533) translate(-50%,-50%);-webkit-text-stroke:0.04px #48a04c;">1.0025</div>
<div class="t" style="left:228.00px;top:136.83px;font-size:14.40px;color:#48a04c;font-weight:normal;transform:scale(0.3333,0.3533) translate(-50%,-50%);-webkit-text-stroke:0.04px #48a04c;">0.4162</div>
<div class="t" style="left:256.65px;top:136.83px;font-size:14.40px;color:#48a04c;font-weight:normal;transform:scale(0.3333,0.3533) translate(-50%,-50%);-webkit-text-stroke:0.04px #48a04c;">0.05</div>
<div class="t" style="left:285.35px;top:136.83px;font-size:14.40px;color:#48a04c;font-weight:normal;transform:scale(0.3333,0.3533) translate(-50%,-50%);-webkit-text-stroke:0.04px #48a04c;">0.94</div>
<div class="t" style="left:314.25px;top:136.83px;font-size:14.40px;color:#48a04c;font-weight:normal;transform:scale(0.3333,0.3533) translate(-50%,-50%);-webkit-text-stroke:0.04px #48a04c;">0.251</div>
<div class="t" style="left:342.80px;top:136.83px;font-size:14.40px;color:#48a04c;font-weight:normal;transform:scale(0.3333,0.3533) translate(-50%,-50%);-webkit-text-stroke:0.04px #48a04c;">4.139</div>
<div class="t" style="left:371.00px;top:136.83px;font-size:14.40px;color:#48a04c;font-weight:normal;transform:scale(0.3333,0.3533) translate(-50%,-50%);-webkit-text-stroke:0.04px #48a04c;">3109.60</div>
<div class="t" style="left:113.50px;top:142.80px;font-size:14.40px;color:#5a5a5a;font-weight:normal;transform:scale(0.3333,0.3533) translate(-50%,-50%);-webkit-text-stroke:0.18px #5a5a5a;">3</div>
<div class="t" style="left:141.50px;top:142.80px;font-size:14.40px;color:#48a04c;font-weight:normal;transform:scale(0.3333,0.3533) translate(-50%,-50%);-webkit-text-stroke:0.04px #48a04c;">0.300</div>
<div class="t" style="left:170.00px;top:142.80px;font-size:14.40px;color:#48a04c;font-weight:normal;transform:scale(0.3333,0.3533) translate(-50%,-50%);-webkit-text-stroke:0.04px #48a04c;">0.0049</div>
<div class="t" style="left:199.00px;top:142.80px;font-size:14.40px;color:#48a04c;font-weight:normal;transform:scale(0.3333,0.3533) translate(-50%,-50%);-webkit-text-stroke:0.04px #48a04c;">0.9981</div>
<div class="t" style="left:228.00px;top:142.80px;font-size:14.40px;color:#48a04c;font-weight:normal;transform:scale(0.3333,0.3533) translate(-50%,-50%);-webkit-text-stroke:0.04px #48a04c;">0.4117</div>
<div class="t" style="left:256.65px;top:142.80px;font-size:14.40px;color:#48a04c;font-weight:normal;transform:scale(0.3333,0.3533) translate(-50%,-50%);-webkit-text-stroke:0.04px #48a04c;">0.49</div>
<div class="t" style="left:285.35px;top:142.80px;font-size:14.40px;color:#48a04c;font-weight:normal;transform:scale(0.3333,0.3533) translate(-50%,-50%);-webkit-text-stroke:0.04px #48a04c;">0.93</div>
<div class="t" style="left:314.25px;top:142.80px;font-size:14.40px;color:#48a04c;font-weight:normal;transform:scale(0.3333,0.3533) translate(-50%,-50%);-webkit-text-stroke:0.04px #48a04c;">0.500</div>
<div class="t" style="left:342.80px;top:142.80px;font-size:14.40px;color:#48a04c;font-weight:normal;transform:scale(0.3333,0.3533) translate(-50%,-50%);-webkit-text-stroke:0.04px #48a04c;">4.278</div>
<div class="t" style="left:371.00px;top:142.80px;font-size:14.40px;color:#48a04c;font-weight:normal;transform:scale(0.3333,0.3533) translate(-50%,-50%);-webkit-text-stroke:0.04px #48a04c;">1558.27</div>
<div class="t" style="left:113.50px;top:148.77px;font-size:14.40px;color:#5a5a5a;font-weight:normal;transform:scale(0.3333,0.3533) translate(-50%,-50%);-webkit-text-stroke:0.18px #5a5a5a;">4</div>
<div class="t" style="left:141.50px;top:148.77px;font-size:14.40px;color:#48a04c;font-weight:normal;transform:scale(0.3333,0.3533) translate(-50%,-50%);-webkit-text-stroke:0.04px #48a04c;">0.550</div>
<div class="t" style="left:170.00px;top:148.77px;font-size:14.40px;color:#48a04c;font-weight:normal;transform:scale(0.3333,0.3533) translate(-50%,-50%);-webkit-text-stroke:0.04px #48a04c;">0.0129</div>
<div class="t" style="left:199.00px;top:148.77px;font-size:14.40px;color:#48a04c;font-weight:normal;transform:scale(0.3333,0.3533) translate(-50%,-50%);-webkit-text-stroke:0.04px #48a04c;">0.9901</div>
<div class="t" style="left:228.00px;top:148.77px;font-size:14.40px;color:#48a04c;font-weight:normal;transform:scale(0.3333,0.3533) translate(-50%,-50%);-webkit-text-stroke:0.04px #48a04c;">0.4037</div>
<div class="t" style="left:256.65px;top:148.77px;font-size:14.40px;color:#48a04c;font-weight:normal;transform:scale(0.3333,0.3533) translate(-50%,-50%);-webkit-text-stroke:0.04px #48a04c;">1.29</div>
<div class="t" style="left:285.35px;top:148.77px;font-size:14.40px;color:#48a04c;font-weight:normal;transform:scale(0.3333,0.3533) translate(-50%,-50%);-webkit-text-stroke:0.04px #48a04c;">0.92</div>
<div class="t" style="left:314.25px;top:148.77px;font-size:14.40px;color:#48a04c;font-weight:normal;transform:scale(0.3333,0.3533) translate(-50%,-50%);-webkit-text-stroke:0.04px #48a04c;">0.251</div>
<div class="t" style="left:342.80px;top:148.77px;font-size:14.40px;color:#48a04c;font-weight:normal;transform:scale(0.3333,0.3533) translate(-50%,-50%);-webkit-text-stroke:0.04px #48a04c;">4.140</div>
<div class="t" style="left:371.00px;top:148.77px;font-size:14.40px;color:#48a04c;font-weight:normal;transform:scale(0.3333,0.3533) translate(-50%,-50%);-webkit-text-stroke:0.04px #48a04c;">3100.40</div>
<div class="t" style="left:113.50px;top:154.74px;font-size:14.40px;color:#5a5a5a;font-weight:normal;transform:scale(0.3333,0.3533) translate(-50%,-50%);-webkit-text-stroke:0.18px #5a5a5a;">5</div>
<div class="t" style="left:141.50px;top:154.74px;font-size:14.40px;color:#48a04c;font-weight:normal;transform:scale(0.3333,0.3533) translate(-50%,-50%);-webkit-text-stroke:0.04px #48a04c;">1.100</div>
<div class="t" style="left:170.00px;top:154.74px;font-size:14.40px;color:#48a04c;font-weight:normal;transform:scale(0.3333,0.3533) translate(-50%,-50%);-webkit-text-stroke:0.04px #48a04c;">0.0523</div>
<div class="t" style="left:199.00px;top:154.74px;font-size:14.40px;color:#48a04c;font-weight:normal;transform:scale(0.3333,0.3533) translate(-50%,-50%);-webkit-text-stroke:0.04px #48a04c;">0.9507</div>
<div class="t" style="left:228.00px;top:154.74px;font-size:14.40px;color:#48a04c;font-weight:normal;transform:scale(0.3333,0.3533) translate(-50%,-50%);-webkit-text-stroke:0.04px #48a04c;">0.4144</div>
<div class="t" style="left:256.65px;top:154.74px;font-size:14.40px;color:#48a04c;font-weight:normal;transform:scale(0.3333,0.3533) translate(-50%,-50%);-webkit-text-stroke:0.04px #48a04c;">5.22</div>
<div class="t" style="left:285.35px;top:154.74px;font-size:14.40px;color:#48a04c;font-weight:normal;transform:scale(0.3333,0.3533) translate(-50%,-50%);-webkit-text-stroke:0.04px #48a04c;">0.86</div>
<div class="t" style="left:314.25px;top:154.74px;font-size:14.40px;color:#48a04c;font-weight:normal;transform:scale(0.3333,0.3533) translate(-50%,-50%);-webkit-text-stroke:0.04px #48a04c;">2.030</div>
<div class="t" style="left:342.80px;top:154.74px;font-size:14.40px;color:#48a04c;font-weight:normal;transform:scale(0.3333,0.3533) translate(-50%,-50%);-webkit-text-stroke:0.04px #48a04c;">1.133</div>
<div class="t" style="left:371.00px;top:154.74px;font-size:14.40px;color:#48a04c;font-weight:normal;transform:scale(0.3333,0.3533) translate(-50%,-50%);-webkit-text-stroke:0.04px #48a04c;">382.11</div>
<div class="t" style="left:113.50px;top:160.71px;font-size:14.40px;color:#5a5a5a;font-weight:normal;transform:scale(0.3333,0.3533) translate(-50%,-50%);-webkit-text-stroke:0.18px #5a5a5a;">6</div>
<div class="t" style="left:141.50px;top:160.71px;font-size:14.40px;color:#48a04c;font-weight:normal;transform:scale(0.3333,0.3533) translate(-50%,-50%);-webkit-text-stroke:0.04px #48a04c;">2.200</div>
<div class="t" style="left:170.00px;top:160.71px;font-size:14.40px;color:#48a04c;font-weight:normal;transform:scale(0.3333,0.3533) translate(-50%,-50%);-webkit-text-stroke:0.04px #48a04c;">0.1531</div>
<div class="t" style="left:199.00px;top:160.71px;font-size:14.40px;color:#48a04c;font-weight:normal;transform:scale(0.3333,0.3533) translate(-50%,-50%);-webkit-text-stroke:0.04px #48a04c;">0.8499</div>
<div class="t" style="left:228.00px;top:160.71px;font-size:14.40px;color:#48a04c;font-weight:normal;transform:scale(0.3333,0.3533) translate(-50%,-50%);-webkit-text-stroke:0.04px #48a04c;">0.3336</div>
<div class="t" style="left:256.65px;top:160.71px;font-size:14.40px;color:#48a04c;font-weight:normal;transform:scale(0.3333,0.3533) translate(-50%,-50%);-webkit-text-stroke:0.04px #48a04c;">15.27</div>
<div class="t" style="left:285.35px;top:160.71px;font-size:14.40px;color:#48a04c;font-weight:normal;transform:scale(0.3333,0.3533) translate(-50%,-50%);-webkit-text-stroke:0.04px #48a04c;">0.65</div>
<div class="t" style="left:314.25px;top:160.71px;font-size:14.40px;color:#48a04c;font-weight:normal;transform:scale(0.3333,0.3533) translate(-50%,-50%);-webkit-text-stroke:0.04px #48a04c;">21.430</div>
<div class="t" style="left:342.80px;top:160.71px;font-size:14.40px;color:#48a04c;font-weight:normal;transform:scale(0.3333,0.3533) translate(-50%,-50%);-webkit-text-stroke:0.04px #48a04c;">11.905</div>
<div class="t" style="left:371.00px;top:160.71px;font-size:14.40px;color:#48a04c;font-weight:normal;transform:scale(0.3333,0.3533) translate(-50%,-50%);-webkit-text-stroke:0.04px #48a04c;">36.349</div>
<div class="t" style="left:113.50px;top:166.68px;font-size:14.40px;color:#5a5a5a;font-weight:normal;transform:scale(0.3333,0.3533) translate(-50%,-50%);-webkit-text-stroke:0.18px #5a5a5a;">7</div>
<div class="t" style="left:141.50px;top:166.68px;font-size:14.40px;color:#48a04c;font-weight:normal;transform:scale(0.3333,0.3533) translate(-50%,-50%);-webkit-text-stroke:0.04px #48a04c;">4.400</div>
<div class="t" style="left:170.00px;top:166.68px;font-size:14.40px;color:#48a04c;font-weight:normal;transform:scale(0.3333,0.3533) translate(-50%,-50%);-webkit-text-stroke:0.04px #48a04c;">0.2491</div>
<div class="t" style="left:199.00px;top:166.68px;font-size:14.40px;color:#48a04c;font-weight:normal;transform:scale(0.3333,0.3533) translate(-50%,-50%);-webkit-text-stroke:0.04px #48a04c;">0.7539</div>
<div class="t" style="left:228.00px;top:166.68px;font-size:14.40px;color:#48a04c;font-weight:normal;transform:scale(0.3333,0.3533) translate(-50%,-50%);-webkit-text-stroke:0.04px #48a04c;">0.2375</div>
<div class="t" style="left:256.65px;top:166.68px;font-size:14.40px;color:#48a04c;font-weight:normal;transform:scale(0.3333,0.3533) translate(-50%,-50%);-webkit-text-stroke:0.04px #48a04c;">24.84</div>
<div class="t" style="left:285.35px;top:166.68px;font-size:14.40px;color:#48a04c;font-weight:normal;transform:scale(0.3333,0.3533) translate(-50%,-50%);-webkit-text-stroke:0.04px #48a04c;">0.46</div>
<div class="t" style="left:314.25px;top:166.68px;font-size:14.40px;color:#48a04c;font-weight:normal;transform:scale(0.3333,0.3533) translate(-50%,-50%);-webkit-text-stroke:0.04px #48a04c;">9.828</div>
<div class="t" style="left:342.80px;top:166.68px;font-size:14.40px;color:#48a04c;font-weight:normal;transform:scale(0.3333,0.3533) translate(-50%,-50%);-webkit-text-stroke:0.04px #48a04c;">1.460</div>
<div class="t" style="left:371.00px;top:166.68px;font-size:14.40px;color:#48a04c;font-weight:normal;transform:scale(0.3333,0.3533) translate(-50%,-50%);-webkit-text-stroke:0.04px #48a04c;">79.269</div>
<div class="t" style="left:113.50px;top:172.65px;font-size:14.40px;color:#5a5a5a;font-weight:normal;transform:scale(0.3333,0.3533) translate(-50%,-50%);-webkit-text-stroke:0.18px #5a5a5a;">8</div>
<div class="t" style="left:141.50px;top:172.65px;font-size:14.40px;color:#48a04c;font-weight:normal;transform:scale(0.3333,0.3533) translate(-50%,-50%);-webkit-text-stroke:0.04px #48a04c;">8.800</div>
<div class="t" style="left:170.00px;top:172.65px;font-size:14.40px;color:#48a04c;font-weight:normal;transform:scale(0.3333,0.3533) translate(-50%,-50%);-webkit-text-stroke:0.04px #48a04c;">0.3140</div>
<div class="t" style="left:199.00px;top:172.65px;font-size:14.40px;color:#48a04c;font-weight:normal;transform:scale(0.3333,0.3533) translate(-50%,-50%);-webkit-text-stroke:0.04px #48a04c;">0.6870</div>
<div class="t" style="left:228.00px;top:172.65px;font-size:14.40px;color:#48a04c;font-weight:normal;transform:scale(0.3333,0.3533) translate(-50%,-50%);-webkit-text-stroke:0.04px #48a04c;">0.1707</div>
<div class="t" style="left:256.65px;top:172.65px;font-size:14.40px;color:#48a04c;font-weight:normal;transform:scale(0.3333,0.3533) translate(-50%,-50%);-webkit-text-stroke:0.04px #48a04c;">31.61</div>
<div class="t" style="left:285.35px;top:172.65px;font-size:14.40px;color:#48a04c;font-weight:normal;transform:scale(0.3333,0.3533) translate(-50%,-50%);-webkit-text-stroke:0.04px #48a04c;">0.33</div>
<div class="t" style="left:314.25px;top:172.65px;font-size:14.40px;color:#48a04c;font-weight:normal;transform:scale(0.3333,0.3533) translate(-50%,-50%);-webkit-text-stroke:0.04px #48a04c;">7.630</div>
<div class="t" style="left:342.80px;top:172.65px;font-size:14.40px;color:#48a04c;font-weight:normal;transform:scale(0.3333,0.3533) translate(-50%,-50%);-webkit-text-stroke:0.04px #48a04c;">1.163</div>
<div class="t" style="left:371.00px;top:172.65px;font-size:14.40px;color:#48a04c;font-weight:normal;transform:scale(0.3333,0.3533) translate(-50%,-50%);-webkit-text-stroke:0.04px #48a04c;">103.48</div>
<div class="t" style="left:113.50px;top:178.62px;font-size:14.40px;color:#5a5a5a;font-weight:normal;transform:scale(0.3333,0.3533) translate(-50%,-50%);-webkit-text-stroke:0.18px #5a5a5a;">9</div>
<div class="t" style="left:141.50px;top:178.62px;font-size:14.40px;color:#48a04c;font-weight:normal;transform:scale(0.3333,0.3533) translate(-50%,-50%);-webkit-text-stroke:0.04px #48a04c;">17.600</div>
<div class="t" style="left:170.00px;top:178.62px;font-size:14.40px;color:#48a04c;font-weight:normal;transform:scale(0.3333,0.3533) translate(-50%,-50%);-webkit-text-stroke:0.04px #48a04c;">0.3948</div>
<div class="t" style="left:199.00px;top:178.62px;font-size:14.40px;color:#48a04c;font-weight:normal;transform:scale(0.3333,0.3533) translate(-50%,-50%);-webkit-text-stroke:0.04px #48a04c;">0.6082</div>
<div class="t" style="left:228.00px;top:178.62px;font-size:14.40px;color:#48a04c;font-weight:normal;transform:scale(0.3333,0.3533) translate(-50%,-50%);-webkit-text-stroke:0.04px #48a04c;">0.0919</div>
<div class="t" style="left:256.65px;top:178.62px;font-size:14.40px;color:#48a04c;font-weight:normal;transform:scale(0.3333,0.3533) translate(-50%,-50%);-webkit-text-stroke:0.04px #48a04c;">39.36</div>
<div class="t" style="left:285.35px;top:178.62px;font-size:14.40px;color:#48a04c;font-weight:normal;transform:scale(0.3333,0.3533) translate(-50%,-50%);-webkit-text-stroke:0.04px #48a04c;">0.18</div>
<div class="t" style="left:314.25px;top:178.62px;font-size:14.40px;color:#48a04c;font-weight:normal;transform:scale(0.3333,0.3533) translate(-50%,-50%);-webkit-text-stroke:0.04px #48a04c;">12.626</div>
<div class="t" style="left:342.80px;top:178.62px;font-size:14.40px;color:#48a04c;font-weight:normal;transform:scale(0.3333,0.3533) translate(-50%,-50%);-webkit-text-stroke:0.04px #48a04c;">7.014</div>
<div class="t" style="left:371.00px;top:178.62px;font-size:14.40px;color:#48a04c;font-weight:normal;transform:scale(0.3333,0.3533) translate(-50%,-50%);-webkit-text-stroke:0.04px #48a04c;">61.000</div>
<div class="t" style="left:113.50px;top:184.59px;font-size:14.40px;color:#5a5a5a;font-weight:normal;transform:scale(0.3333,0.3533) translate(-50%,-50%);-webkit-text-stroke:0.18px #5a5a5a;">10</div>
<div class="t" style="left:141.50px;top:184.59px;font-size:14.40px;color:#48a04c;font-weight:normal;transform:scale(0.3333,0.3533) translate(-50%,-50%);-webkit-text-stroke:0.04px #48a04c;">35.200</div>
<div class="t" style="left:170.00px;top:184.59px;font-size:14.40px;color:#48a04c;font-weight:normal;transform:scale(0.3333,0.3533) translate(-50%,-50%);-webkit-text-stroke:0.04px #48a04c;">0.4613</div>
<div class="t" style="left:199.00px;top:184.59px;font-size:14.40px;color:#48a04c;font-weight:normal;transform:scale(0.3333,0.3533) translate(-50%,-50%);-webkit-text-stroke:0.04px #48a04c;">0.5417</div>
<div class="t" style="left:228.00px;top:184.59px;font-size:14.40px;color:#48a04c;font-weight:normal;transform:scale(0.3333,0.3533) translate(-50%,-50%);-webkit-text-stroke:0.04px #48a04c;">0.0253</div>
<div class="t" style="left:256.65px;top:184.59px;font-size:14.40px;color:#48a04c;font-weight:normal;transform:scale(0.3333,0.3533) translate(-50%,-50%);-webkit-text-stroke:0.04px #48a04c;">46.00</div>
<div class="t" style="left:285.35px;top:184.59px;font-size:14.40px;color:#48a04c;font-weight:normal;transform:scale(0.3333,0.3533) translate(-50%,-50%);-webkit-text-stroke:0.04px #48a04c;">0.05</div>
<div class="t" style="left:314.25px;top:184.59px;font-size:14.40px;color:#48a04c;font-weight:normal;transform:scale(0.3333,0.3533) translate(-50%,-50%);-webkit-text-stroke:0.04px #48a04c;">4.828</div>
<div class="t" style="left:342.80px;top:184.59px;font-size:14.40px;color:#48a04c;font-weight:normal;transform:scale(0.3333,0.3533) translate(-50%,-50%);-webkit-text-stroke:0.04px #48a04c;">2.662</div>
<div class="t" style="left:371.00px;top:184.59px;font-size:14.40px;color:#48a04c;font-weight:normal;transform:scale(0.3333,0.3533) translate(-50%,-50%);-webkit-text-stroke:0.04px #48a04c;">161.33</div>
<div class="t" style="left:113.50px;top:190.56px;font-size:14.40px;color:#5a5a5a;font-weight:normal;transform:scale(0.3333,0.3533) translate(-50%,-50%);-webkit-text-stroke:0.18px #5a5a5a;">11</div>
<div class="t" style="left:141.50px;top:190.56px;font-size:14.40px;color:#48a04c;font-weight:normal;transform:scale(0.3333,0.3533) translate(-50%,-50%);-webkit-text-stroke:0.04px #48a04c;">17.600</div>
<div class="t" style="left:170.00px;top:190.56px;font-size:14.40px;color:#48a04c;font-weight:normal;transform:scale(0.3333,0.3533) translate(-50%,-50%);-webkit-text-stroke:0.04px #48a04c;">0.4608</div>
<div class="t" style="left:199.00px;top:190.56px;font-size:14.40px;color:#48a04c;font-weight:normal;transform:scale(0.3333,0.3533) translate(-50%,-50%);-webkit-text-stroke:0.04px #48a04c;">0.5404</div>
<div class="t" style="left:228.00px;top:190.56px;font-size:14.40px;color:#48a04c;font-weight:normal;transform:scale(0.3333,0.3533) translate(-50%,-50%);-webkit-text-stroke:0.04px #48a04c;">0.0241</div>
<div class="t" style="left:256.65px;top:190.56px;font-size:14.40px;color:#48a04c;font-weight:normal;transform:scale(0.3333,0.3533) translate(-50%,-50%);-webkit-text-stroke:0.04px #48a04c;">46.12</div>
<div class="t" style="left:285.35px;top:190.56px;font-size:14.40px;color:#48a04c;font-weight:normal;transform:scale(0.3333,0.3533) translate(-50%,-50%);-webkit-text-stroke:0.04px #48a04c;">0.05</div>
<div class="t" style="left:314.25px;top:190.56px;font-size:14.40px;color:#48a04c;font-weight:normal;transform:scale(0.3333,0.3533) translate(-50%,-50%);-webkit-text-stroke:0.04px #48a04c;">0.000</div>
<div class="t" style="left:342.80px;top:190.56px;font-size:14.40px;color:#48a04c;font-weight:normal;transform:scale(0.3333,0.3533) translate(-50%,-50%);-webkit-text-stroke:0.04px #48a04c;">0.000</div>
<div class="t" style="left:371.00px;top:190.56px;font-size:14.40px;color:#48a04c;font-weight:normal;transform:scale(0.3333,0.3533) translate(-50%,-50%);-webkit-text-stroke:0.04px #48a04c;">0.0000</div>
<div class="t" style="left:113.50px;top:196.53px;font-size:14.40px;color:#5a5a5a;font-weight:normal;transform:scale(0.3333,0.3533) translate(-50%,-50%);-webkit-text-stroke:0.18px #5a5a5a;">12</div>
<div class="t" style="left:141.50px;top:196.53px;font-size:14.40px;color:#48a04c;font-weight:normal;transform:scale(0.3333,0.3533) translate(-50%,-50%);-webkit-text-stroke:0.04px #48a04c;">4.400</div>
<div class="t" style="left:170.00px;top:196.53px;font-size:14.40px;color:#48a04c;font-weight:normal;transform:scale(0.3333,0.3533) translate(-50%,-50%);-webkit-text-stroke:0.04px #48a04c;">0.4439</div>
<div class="t" style="left:199.00px;top:196.53px;font-size:14.40px;color:#48a04c;font-weight:normal;transform:scale(0.3333,0.3533) translate(-50%,-50%);-webkit-text-stroke:0.04px #48a04c;">0.5591</div>
<div class="t" style="left:228.00px;top:196.53px;font-size:14.40px;color:#48a04c;font-weight:normal;transform:scale(0.3333,0.3533) translate(-50%,-50%);-webkit-text-stroke:0.04px #48a04c;">0.0428</div>
<div class="t" style="left:256.65px;top:196.53px;font-size:14.40px;color:#48a04c;font-weight:normal;transform:scale(0.3333,0.3533) translate(-50%,-50%);-webkit-text-stroke:0.04px #48a04c;">44.25</div>
<div class="t" style="left:285.35px;top:196.53px;font-size:14.40px;color:#48a04c;font-weight:normal;transform:scale(0.3333,0.3533) translate(-50%,-50%);-webkit-text-stroke:0.04px #48a04c;">0.08</div>
<div class="t" style="left:314.25px;top:196.53px;font-size:14.40px;color:#48a04c;font-weight:normal;transform:scale(0.3333,0.3533) translate(-50%,-50%);-webkit-text-stroke:0.04px #48a04c;">0.000</div>
<div class="t" style="left:342.80px;top:196.53px;font-size:14.40px;color:#48a04c;font-weight:normal;transform:scale(0.3333,0.3533) translate(-50%,-50%);-webkit-text-stroke:0.04px #48a04c;">0.000</div>
<div class="t" style="left:371.00px;top:196.53px;font-size:14.40px;color:#48a04c;font-weight:normal;transform:scale(0.3333,0.3533) translate(-50%,-50%);-webkit-text-stroke:0.04px #48a04c;">0.0000</div>
<div class="t" style="left:113.50px;top:202.50px;font-size:14.40px;color:#5a5a5a;font-weight:normal;transform:scale(0.3333,0.3533) translate(-50%,-50%);-webkit-text-stroke:0.18px #5a5a5a;">13</div>
<div class="t" style="left:141.50px;top:202.50px;font-size:14.40px;color:#48a04c;font-weight:normal;transform:scale(0.3333,0.3533) translate(-50%,-50%);-webkit-text-stroke:0.04px #48a04c;">1.100</div>
<div class="t" style="left:170.00px;top:202.50px;font-size:14.40px;color:#48a04c;font-weight:normal;transform:scale(0.3333,0.3533) translate(-50%,-50%);-webkit-text-stroke:0.04px #48a04c;">0.4142</div>
<div class="t" style="left:199.00px;top:202.50px;font-size:14.40px;color:#48a04c;font-weight:normal;transform:scale(0.3333,0.3533) translate(-50%,-50%);-webkit-text-stroke:0.04px #48a04c;">0.5888</div>
<div class="t" style="left:228.00px;top:202.50px;font-size:14.40px;color:#48a04c;font-weight:normal;transform:scale(0.3333,0.3533) translate(-50%,-50%);-webkit-text-stroke:0.04px #48a04c;">0.0725</div>
<div class="t" style="left:256.65px;top:202.50px;font-size:14.40px;color:#48a04c;font-weight:normal;transform:scale(0.3333,0.3533) translate(-50%,-50%);-webkit-text-stroke:0.04px #48a04c;">41.29</div>
<div class="t" style="left:285.35px;top:202.50px;font-size:14.40px;color:#48a04c;font-weight:normal;transform:scale(0.3333,0.3533) translate(-50%,-50%);-webkit-text-stroke:0.04px #48a04c;">0.14</div>
<div class="t" style="left:314.25px;top:202.50px;font-size:14.40px;color:#48a04c;font-weight:normal;transform:scale(0.3333,0.3533) translate(-50%,-50%);-webkit-text-stroke:0.04px #48a04c;">0.000</div>
<div class="t" style="left:342.80px;top:202.50px;font-size:14.40px;color:#48a04c;font-weight:normal;transform:scale(0.3333,0.3533) translate(-50%,-50%);-webkit-text-stroke:0.04px #48a04c;">0.000</div>
<div class="t" style="left:371.00px;top:202.50px;font-size:14.40px;color:#48a04c;font-weight:normal;transform:scale(0.3333,0.3533) translate(-50%,-50%);-webkit-text-stroke:0.04px #48a04c;">0.0000</div>
<div class="t" style="left:113.50px;top:208.47px;font-size:14.40px;color:#5a5a5a;font-weight:normal;transform:scale(0.3333,0.3533) translate(-50%,-50%);-webkit-text-stroke:0.18px #5a5a5a;">14</div>
<div class="t" style="left:141.50px;top:208.47px;font-size:14.40px;color:#48a04c;font-weight:normal;transform:scale(0.3333,0.3533) translate(-50%,-50%);-webkit-text-stroke:0.04px #48a04c;">0.300</div>
<div class="t" style="left:170.00px;top:208.47px;font-size:14.40px;color:#48a04c;font-weight:normal;transform:scale(0.3333,0.3533) translate(-50%,-50%);-webkit-text-stroke:0.04px #48a04c;">0.3921</div>
<div class="t" style="left:199.00px;top:208.47px;font-size:14.40px;color:#48a04c;font-weight:normal;transform:scale(0.3333,0.3533) translate(-50%,-50%);-webkit-text-stroke:0.04px #48a04c;">0.6059</div>
<div class="t" style="left:228.00px;top:208.47px;font-size:14.40px;color:#48a04c;font-weight:normal;transform:scale(0.3333,0.3533) translate(-50%,-50%);-webkit-text-stroke:0.04px #48a04c;">0.0896</div>
<div class="t" style="left:256.65px;top:208.47px;font-size:14.40px;color:#48a04c;font-weight:normal;transform:scale(0.3333,0.3533) translate(-50%,-50%);-webkit-text-stroke:0.04px #48a04c;">39.50</div>
<div class="t" style="left:285.35px;top:208.47px;font-size:14.40px;color:#48a04c;font-weight:normal;transform:scale(0.3333,0.3533) translate(-50%,-50%);-webkit-text-stroke:0.04px #48a04c;">0.17</div>
<div class="t" style="left:314.25px;top:208.47px;font-size:14.40px;color:#48a04c;font-weight:normal;transform:scale(0.3333,0.3533) translate(-50%,-50%);-webkit-text-stroke:0.04px #48a04c;">0.000</div>
<div class="t" style="left:342.80px;top:208.47px;font-size:14.40px;color:#48a04c;font-weight:normal;transform:scale(0.3333,0.3533) translate(-50%,-50%);-webkit-text-stroke:0.04px #48a04c;">0.000</div>
<div class="t" style="left:371.00px;top:208.47px;font-size:14.40px;color:#48a04c;font-weight:normal;transform:scale(0.3333,0.3533) translate(-50%,-50%);-webkit-text-stroke:0.04px #48a04c;">0.0000</div>
<div class="t" style="left:113.50px;top:214.44px;font-size:14.40px;color:#5a5a5a;font-weight:normal;transform:scale(0.3333,0.3533) translate(-50%,-50%);-webkit-text-stroke:0.18px #5a5a5a;">15</div>
<div class="t" style="left:141.50px;top:214.44px;font-size:14.40px;color:#48a04c;font-weight:normal;transform:scale(0.3333,0.3533) translate(-50%,-50%);-webkit-text-stroke:0.04px #48a04c;">0.050</div>
<div class="t" style="left:170.00px;top:214.44px;font-size:14.40px;color:#48a04c;font-weight:normal;transform:scale(0.3333,0.3533) translate(-50%,-50%);-webkit-text-stroke:0.04px #48a04c;">0.3712</div>
<div class="t" style="left:199.00px;top:214.44px;font-size:14.40px;color:#48a04c;font-weight:normal;transform:scale(0.3333,0.3533) translate(-50%,-50%);-webkit-text-stroke:0.04px #48a04c;">0.6248</div>
<div class="t" style="left:228.00px;top:214.44px;font-size:14.40px;color:#48a04c;font-weight:normal;transform:scale(0.3333,0.3533) translate(-50%,-50%);-webkit-text-stroke:0.04px #48a04c;">0.1084</div>
<div class="t" style="left:256.65px;top:214.44px;font-size:14.40px;color:#48a04c;font-weight:normal;transform:scale(0.3333,0.3533) translate(-50%,-50%);-webkit-text-stroke:0.04px #48a04c;">37.71</div>
<div class="t" style="left:285.35px;top:214.44px;font-size:14.40px;color:#48a04c;font-weight:normal;transform:scale(0.3333,0.3533) translate(-50%,-50%);-webkit-text-stroke:0.04px #48a04c;">0.21</div>
<div class="t" style="left:314.25px;top:214.44px;font-size:14.40px;color:#48a04c;font-weight:normal;transform:scale(0.3333,0.3533) translate(-50%,-50%);-webkit-text-stroke:0.04px #48a04c;">0.000</div>
<div class="t" style="left:342.80px;top:214.44px;font-size:14.40px;color:#48a04c;font-weight:normal;transform:scale(0.3333,0.3533) translate(-50%,-50%);-webkit-text-stroke:0.04px #48a04c;">0.000</div>
<div class="t" style="left:371.00px;top:214.44px;font-size:14.40px;color:#48a04c;font-weight:normal;transform:scale(0.3333,0.3533) translate(-50%,-50%);-webkit-text-stroke:0.04px #48a04c;">0.0000</div>
<div class="a" style="left:94.00px;top:339.40px;width:545.00px;height:16.60px;background:linear-gradient(#5a5a5a,#555555 53%,#4a4a4a 54%,#3a3a3a)"></div>
<div class="a" style="left:95.70px;top:340.00px;width:21.30px;height:8.80px;background:linear-gradient(#f4f4f4,#e2e2e2);border-radius:0.8px"></div>
<div class="t" style="left:106.30px;top:344.50px;font-size:11.70px;color:#1a1a1a;font-weight:bold;transform:scale(0.3333,0.3833) translate(-50%,-50%);-webkit-text-stroke:0.35px #1a1a1a;">Summary</div>
<div class="t" style="left:130.75px;top:344.60px;font-size:11.55px;color:#cfcfcf;font-weight:normal;transform:scale(0.3333,0.3833) translate(-50%,-50%);-webkit-text-stroke:0.35px #cfcfcf;">Loading Data</div>
<div class="t" style="left:161.10px;top:344.60px;font-size:11.55px;color:#cfcfcf;font-weight:normal;transform:scale(0.3333,0.3833) translate(-50%,-50%);-webkit-text-stroke:0.35px #cfcfcf;">Percent Strain</div>
<div class="t" style="left:196.30px;top:344.60px;font-size:11.55px;color:#cfcfcf;font-weight:normal;transform:scale(0.3333,0.3833) translate(-50%,-50%);-webkit-text-stroke:0.35px #cfcfcf;">Percent Strain (Log)</div>
<div class="t" style="left:230.85px;top:344.60px;font-size:11.55px;color:#cfcfcf;font-weight:normal;transform:scale(0.3333,0.3833) translate(-50%,-50%);-webkit-text-stroke:0.35px #cfcfcf;">Final Voids</div>
<div class="t" style="left:270.70px;top:344.60px;font-size:11.55px;color:#cfcfcf;font-weight:normal;transform:scale(0.3333,0.3833) translate(-50%,-50%);-webkit-text-stroke:0.35px #cfcfcf;">Coefficients of Consolidation</div>
<div class="t" style="left:316.85px;top:344.60px;font-size:11.55px;color:#cfcfcf;font-weight:normal;transform:scale(0.3333,0.3833) translate(-50%,-50%);-webkit-text-stroke:0.35px #cfcfcf;">Height Change</div>
<div class="t" style="left:352.10px;top:344.60px;font-size:11.55px;color:#cfcfcf;font-weight:normal;transform:scale(0.3333,0.3833) translate(-50%,-50%);-webkit-text-stroke:0.35px #cfcfcf;">Square-Root Time</div>
<div class="a" style="left:94.00px;top:356.00px;width:545.00px;height:11.00px;background:#05294a"></div>
<div class="a" style="left:98.12px;top:358.91px;width:2.06px;height:1.97px;background:#f0f4f8"></div>
<div class="a" style="left:98.12px;top:361.52px;width:2.06px;height:1.97px;background:#f0f4f8"></div>
<div class="a" style="left:100.82px;top:358.91px;width:2.06px;height:1.97px;background:#f0f4f8"></div>
<div class="a" style="left:100.82px;top:361.52px;width:2.06px;height:1.97px;background:#f0f4f8"></div>
<div class="a" style="left:112.00px;top:358.70px;width:5.00px;height:5.00px;border:0.8px solid #e8eef4;border-radius:50%"></div>
<div class="a" style="left:124.60px;top:358.90px;width:6.00px;height:4.60px;border:0.8px solid #8898a8;border-radius:45%"></div>
<div class="t" style="left:141.50px;top:360.90px;font-size:27.00px;color:#2a8ae8;font-weight:bold;transform:scale(0.3333,0.3333) translate(-50%,-50%);-webkit-text-stroke:0.6px #2a8ae8;">e</div>
<div class="a" style="left:152.50px;top:358.40px;width:7.00px;height:5.60px;background:linear-gradient(#f8d878 0,#f8d878 60%,#60a8e0 60%);border-radius:0.5px"></div>
<div class="a" style="left:167.00px;top:358.40px;width:7.00px;height:5.60px;background:linear-gradient(90deg,#1a68c8 55%,#58a0e8 55%);border-radius:0.5px"></div>
<div class="t" style="left:169.30px;top:361.20px;font-size:10.50px;color:#fff;font-weight:bold;transform:scale(0.3333,0.3833) translate(-50%,-50%);-webkit-text-stroke:0.35px #fff;">O</div>
<div class="a" style="left:181.00px;top:358.20px;width:6.00px;height:6.00px;background:#8a3ac0;clip-path:polygon(0 25%,30% 50%,0 75%,20% 100%,100% 60%,100% 0,20% 0,0 25%)"></div>
<div class="a" style="left:183.00px;top:359.70px;width:3.00px;height:3.00px;background:#fff;clip-path:polygon(0 50%,100% 0,100% 100%)"></div>
<div class="a" style="left:194.80px;top:358.20px;width:5.60px;height:6.00px;background:linear-gradient(#f0a838,#d88818);border-radius:0.5px"></div>
<div class="t" style="left:197.90px;top:361.50px;font-size:12.00px;color:#5a3a10;font-weight:bold;transform:scale(0.3333,0.3833) translate(-50%,-50%);-webkit-text-stroke:0.35px #5a3a10;">d</div>
<div class="a" style="left:208.00px;top:358.20px;width:7.40px;height:6.00px;background:linear-gradient(#3ac040,#20a028)"></div>
<div class="a" style="left:208.00px;top:358.20px;width:1.70px;height:1.50px;background:#186818"></div>
<div class="a" style="left:135.70px;top:366.10px;width:11.60px;height:0.70px;background:#6aa0d0;opacity:0.8"></div>
<div class="a" style="left:150.20px;top:366.10px;width:11.60px;height:0.70px;background:#6aa0d0;opacity:0.8"></div>
<div class="a" style="left:164.70px;top:366.10px;width:11.60px;height:0.70px;background:#6aa0d0;opacity:0.8"></div>
<div class="a" style="left:178.20px;top:366.10px;width:11.60px;height:0.70px;background:#6aa0d0;opacity:0.8"></div>
<div class="a" style="left:191.80px;top:366.10px;width:11.60px;height:0.70px;background:#6aa0d0;opacity:0.8"></div>
<div class="a" style="left:205.90px;top:366.10px;width:11.60px;height:0.70px;background:#6aa0d0;opacity:0.8"></div>
<div class="a" style="left:377.00px;top:102.00px;width:552.00px;height:345.00px;background:#505050"></div>
<div class="a" style="left:377.00px;top:102.00px;width:552.00px;height:7.00px;background:#fff"></div>
<div class="a" style="left:377.60px;top:103.00px;width:4.00px;height:4.80px;background:linear-gradient(160deg,#40d840,#20b020 60%,#108010)"></div>
<div class="t" style="left:383.80px;top:105.50px;font-size:9.99px;color:#a4a4a4;font-weight:normal;transform:scale(0.3333,0.3833) translate(0,-50%);-webkit-text-stroke:0.12px #a4a4a4;">Consol_Test.hvdm - Consolidation Test</div>
<div class="a" style="left:893.60px;top:105.30px;width:4.20px;height:0.40px;background:#c4c4c4"></div>
<div class="a" style="left:906.50px;top:103.70px;width:3.20px;height:3.20px;border:0.4px solid #bcbcbc"></div>
<svg width="1024" height="474"><path d="M920,103.6 L923.2,106.8 M923.2,103.6 L920,106.8" stroke="#b4b4b4" stroke-width="0.45"/></svg>
<div class="a" style="left:377.00px;top:109.00px;width:552.00px;height:13.50px;background:#6e6e6e"></div>
<svg width="1024" height="474"><g transform="translate(378.4,110.4)"><path d="M0.2,0 L2.4,0 L3.3,0.9 L3.3,4.6 L0.2,4.6Z" fill="#f6f8fa"/><path d="M5.3,1.0 L7.2,1.0 L7.7,1.5 L9.6,1.5 L9.6,4.2 L5.3,4.2Z" fill="#f0c850"/><path d="M8.6,1.8 L10.0,2.9 L8.6,4.0Z" fill="#f8d870"/><circle cx="13.2" cy="2.2" r="1.9" fill="#dce8f4" stroke="#7c90b8" stroke-width="0.5"/><path d="M14.3,3.4 L16.2,5.0" stroke="#c8a040" stroke-width="0.8"/><path d="M19.8,0.4 L22.6,0.4 L22.6,1.8 L24.0,1.8 L24.0,4.0 L18.4,4.0 L18.4,1.8 L19.8,1.8Z" fill="#e4eaf0"/><circle cx="21.2" cy="4.4" r="0.9" fill="#3a7ad8"/><rect x="25.3" y="0.3" width="0.5" height="4.5" fill="#555"/><path d="M27.3,2.0 L29.0,2.0 L28.15,3.1Z" fill="#222"/></g></svg>
<div class="a" style="left:517.60px;top:109.40px;width:41.00px;height:8.00px;background:linear-gradient(#56aab8,#3a92a2)"></div>
<div class="t" style="left:538.10px;top:113.40px;font-size:11.70px;color:#e8f4f8;font-weight:normal;transform:scale(0.3333,0.3833) translate(-50%,-50%);-webkit-text-stroke:0.35px #e8f4f8;">Axial Strain Tools</div>
<div class="a" style="left:377.00px;top:117.00px;width:15.50px;height:5.50px;background:linear-gradient(#2a6ac0,#1a50a0)"></div>
<div class="t" style="left:384.80px;top:120.00px;font-size:10.20px;color:#e8f0ff;font-weight:normal;transform:scale(0.3333,0.3833) translate(-50%,-50%);-webkit-text-stroke:0.15px #e8f0ff;">File &#9662;</div>
<div class="a" style="left:443.40px;top:117.30px;width:17.00px;height:5.30px;background:linear-gradient(#f6f6f6,#e2e2e2)"></div>
<div class="t" style="left:451.90px;top:119.60px;font-size:11.70px;color:#333;font-weight:normal;transform:scale(0.3333,0.3833) translate(-50%,-50%);-webkit-text-stroke:0.35px #333;">Graph</div>
<div class="t" style="left:411.50px;top:119.50px;font-size:11.70px;color:#c0c0c0;font-weight:normal;transform:scale(0.3333,0.3833) translate(-50%,-50%);-webkit-text-stroke:0.15px #c0c0c0;">Test Parameters</div>
<div class="t" style="left:435.00px;top:119.50px;font-size:11.70px;color:#8a8a8a;font-weight:normal;transform:scale(0.3333,0.3833) translate(-50%,-50%);-webkit-text-stroke:0.15px #8a8a8a;">Edit</div>
<div class="t" style="left:471.50px;top:119.50px;font-size:11.70px;color:#c4c4c4;font-weight:normal;transform:scale(0.3333,0.3833) translate(-50%,-50%);-webkit-text-stroke:0.15px #c4c4c4;">Reports</div>
<div class="t" style="left:491.50px;top:119.50px;font-size:11.70px;color:#c4c4c4;font-weight:normal;transform:scale(0.3333,0.3833) translate(-50%,-50%);-webkit-text-stroke:0.15px #c4c4c4;">Options</div>
<div class="t" style="left:509.50px;top:119.50px;font-size:11.70px;color:#c4c4c4;font-weight:normal;transform:scale(0.3333,0.3833) translate(-50%,-50%);-webkit-text-stroke:0.15px #c4c4c4;">View</div>
<div class="t" style="left:538.00px;top:119.50px;font-size:11.70px;color:#c4c4c4;font-weight:normal;transform:scale(0.3333,0.3833) translate(-50%,-50%);-webkit-text-stroke:0.15px #c4c4c4;">Casagrande Method</div>
<div class="a" style="left:377.00px;top:122.50px;width:552.00px;height:29.20px;background:linear-gradient(#d6d6d6,#c2c2c2 35%,#ababab 90%,#a2a2a2)"></div>
<div class="a" style="left:377.00px;top:151.70px;width:552.00px;height:1.10px;background:#5c5c5c"></div>
<div class="a" style="left:377.00px;top:152.80px;width:552.00px;height:1.20px;background:#d4d4d8"></div>
<div class="a" style="left:377.00px;top:154.00px;width:552.00px;height:5.60px;background:linear-gradient(#ffc870,#fbb040 60%,#f8a830)"></div>
<div class="t" style="left:379.00px;top:156.80px;font-size:10.50px;color:#3a2a10;font-weight:normal;transform:scale(0.3333,0.3833) translate(0,-50%);-webkit-text-stroke:0.35px #3a2a10;">Final Voids</div>
<div class="a" style="left:918.50px;top:155.70px;width:2.30px;height:2.30px;background:#5a4010"></div>
<div class="a" style="left:923.50px;top:155.70px;width:2.30px;height:2.30px;background:#5a4010"></div>
<div class="a" style="left:382.60px;top:124.60px;width:9.40px;height:9.40px;background:conic-gradient(from 20deg,#2a7ad8 0 62%,#e84a30 62% 85%,#f0b020 85% 100%);border-radius:50%"></div>
<div class="a" style="left:384.50px;top:126.50px;width:5.60px;height:5.60px;background:#c6c6c6;border-radius:50%"></div>
<div class="t" style="left:387.30px;top:136.80px;font-size:10.80px;color:#333;font-weight:normal;transform:scale(0.3333,0.3833) translate(-50%,-50%);-webkit-text-stroke:0.35px #333;">Refresh</div>
<div class="t" style="left:387.30px;top:141.50px;font-size:11.70px;color:#333;font-weight:normal;transform:scale(0.3333,0.3833) translate(-50%,-50%);-webkit-text-stroke:0.35px #333;">Graphs &#9662;</div>
<div class="a" style="left:396.50px;top:124.00px;width:0.50px;height:22.00px;background:#b8b8b8;opacity:0.7"></div>
<div class="a" style="left:400.20px;top:125.50px;width:7.50px;height:7.50px;background:linear-gradient(#f09080,#e04a38 35%,#d83a28);border:0.4px solid #b06050"></div>
<div class="t" style="left:404.00px;top:129.40px;font-size:15.00px;color:#fff;font-weight:bold;transform:scale(0.3333,0.3833) translate(-50%,-50%);-webkit-text-stroke:0.35px #fff;">&#215;</div>
<div class="t" style="left:404.00px;top:136.80px;font-size:10.80px;color:#333;font-weight:normal;transform:scale(0.3333,0.3833) translate(-50%,-50%);-webkit-text-stroke:0.35px #333;">Clear</div>
<div class="t" style="left:404.00px;top:141.50px;font-size:11.70px;color:#333;font-weight:normal;transform:scale(0.3333,0.3833) translate(-50%,-50%);-webkit-text-stroke:0.35px #333;">Graph</div>
<div class="a" style="left:410.60px;top:123.50px;width:0.60px;height:27.50px;background:#a8a8a8"></div>
<div class="a" style="left:414.00px;top:126.00px;width:4.00px;height:4.00px;background:#f4f4f4;border:0.4px solid #c0c0c0"></div>
<div class="t" style="left:419.00px;top:128.30px;font-size:11.70px;color:#333;font-weight:normal;transform:scale(0.3333,0.3833) translate(0,-50%);-webkit-text-stroke:0.35px #333;">Manual Scaling</div>
<div class="a" style="left:414.00px;top:133.00px;width:4.00px;height:4.00px;background:#f4f4f4;border:0.4px solid #c0c0c0"></div>
<div class="t" style="left:415.80px;top:135.20px;font-size:9.60px;color:#333;font-weight:normal;transform:scale(0.3333,0.3833) translate(-50%,-50%);-webkit-text-stroke:0.35px #333;">&#10003;</div>
<div class="t" style="left:419.00px;top:135.20px;font-size:11.70px;color:#333;font-weight:normal;transform:scale(0.3333,0.3833) translate(0,-50%);-webkit-text-stroke:0.35px #333;">Show Points</div>
<div class="a" style="left:414.00px;top:139.00px;width:4.00px;height:4.00px;background:#f4f4f4;border:0.4px solid #c0c0c0"></div>
<div class="t" style="left:419.00px;top:141.00px;font-size:11.70px;color:#333;font-weight:normal;transform:scale(0.3333,0.3833) translate(0,-50%);-webkit-text-stroke:0.35px #333;">Smooth Curve</div>
<div class="a" style="left:448.00px;top:133.00px;width:4.00px;height:4.00px;background:#f4f4f4;border:0.4px solid #c0c0c0"></div>
<div class="t" style="left:453.00px;top:135.20px;font-size:11.70px;color:#333;font-weight:normal;transform:scale(0.3333,0.3833) translate(0,-50%);-webkit-text-stroke:0.35px #333;">Invert Y Axis</div>
<svg width="1024" height="474"><circle cx="483.6" cy="127.6" r="2.9" fill="rgba(255,255,255,0.25)" stroke="#e4e4e4" stroke-width="0.9"/><path d="M481.6,129.8 L478.4,133.4" stroke="#d8d8d8" stroke-width="1.2" stroke-linecap="round"/></svg>
<div class="t" style="left:482.50px;top:137.60px;font-size:11.70px;color:#d4d4d4;font-weight:normal;transform:scale(0.3333,0.3833) translate(-50%,-50%);-webkit-text-stroke:0.35px #d4d4d4;">Manual</div>
<div class="t" style="left:482.50px;top:142.00px;font-size:11.70px;color:#d4d4d4;font-weight:normal;transform:scale(0.3333,0.3833) translate(-50%,-50%);-webkit-text-stroke:0.35px #d4d4d4;">Scaling</div>
<div class="a" style="left:490.50px;top:124.00px;width:0.50px;height:22.00px;background:#b8b8b8;opacity:0.7"></div>
<svg width="1024" height="474"><rect x="493.6" y="125.2" width="7.6" height="7.6" fill="#f4f8ff" stroke="#ffffff" stroke-width="0.6" stroke-dasharray="0.8,0.5"/><rect x="495.2" y="126.2" width="5" height="5.4" fill="#b0b8f0"/><circle cx="498.3" cy="128.6" r="1.6" fill="#d8e8ff" stroke="#7088d8" stroke-width="0.4"/><path d="M499.5,130 L501.6,133" stroke="#707080" stroke-width="0.7"/></svg>
<div class="t" style="left:497.70px;top:136.70px;font-size:11.10px;color:#333;font-weight:normal;transform:scale(0.3333,0.3833) translate(-50%,-50%);-webkit-text-stroke:0.35px #333;">Zoom</div>
<div class="a" style="left:504.70px;top:124.00px;width:0.50px;height:22.00px;background:#b8b8b8;opacity:0.7"></div>
<svg width="1024" height="474"><rect x="510.2" y="125.8" width="5.8" height="7.3" rx="0.5" fill="#eef4fc" stroke="#a8b8e8" stroke-width="0.5"/><path d="M512,127.2 Q514.8,126.6 514.9,128.6 L513.4,129.3 Q513.3,128.2 512,128.4Z" fill="#30b040"/><path d="M514.4,131.6 Q511.8,132.3 511.6,130.2 L513.1,129.6 Q513.2,130.7 514.4,130.5Z" fill="#108020"/></svg>
<div class="t" style="left:513.50px;top:136.70px;font-size:11.10px;color:#333;font-weight:normal;transform:scale(0.3333,0.3833) translate(-50%,-50%);-webkit-text-stroke:0.35px #333;">Refresh</div>
<div class="a" style="left:521.80px;top:123.50px;width:0.60px;height:27.50px;background:#a8a8a8"></div>
<div class="t" style="left:524.00px;top:128.70px;font-size:11.70px;color:#222;font-weight:bold;transform:scale(0.3333,0.3833) translate(0,-50%);-webkit-text-stroke:0.35px #222;text-decoration:underline">XY Position</div>
<div class="t" style="left:524.00px;top:135.30px;font-size:11.70px;color:#333;font-weight:normal;transform:scale(0.3333,0.3833) translate(0,-50%);-webkit-text-stroke:0.35px #333;">X 0</div>
<div class="t" style="left:524.00px;top:141.30px;font-size:11.70px;color:#333;font-weight:normal;transform:scale(0.3333,0.3833) translate(0,-50%);-webkit-text-stroke:0.35px #333;">Y 0.98</div>
<div class="a" style="left:547.60px;top:123.50px;width:0.60px;height:27.50px;background:#a8a8a8"></div>
<div class="t" style="left:395.00px;top:148.70px;font-size:11.70px;color:#4a4a4a;font-weight:normal;transform:scale(0.3333,0.3833) translate(-50%,-50%);-webkit-text-stroke:0.35px #4a4a4a;">Graph</div>
<div class="t" style="left:466.60px;top:148.70px;font-size:11.70px;color:#4a4a4a;font-weight:normal;transform:scale(0.3333,0.3833) translate(-50%,-50%);-webkit-text-stroke:0.35px #4a4a4a;">Options [Final Voids]</div>
<div class="t" style="left:534.50px;top:148.70px;font-size:11.70px;color:#4a4a4a;font-weight:normal;transform:scale(0.3333,0.3833) translate(-50%,-50%);-webkit-text-stroke:0.35px #4a4a4a;">Cursor</div>
<div class="t" style="left:653.00px;top:170.90px;font-size:17.40px;color:#d4d4d4;font-weight:bold;transform:scale(0.3333,0.3833) translate(-50%,-50%);-webkit-text-stroke:0.35px #d4d4d4;">Final Voids</div>
<div class="a" style="left:535.00px;top:181.00px;width:238.00px;height:238.00px;background:#fff;border-radius:1.5px"></div>
<div class="a" style="left:776.20px;top:266.80px;width:99.80px;height:45.50px;background:linear-gradient(#fcfcfc,#eeeeee 60%,#e2e2e2);border-radius:1.2px;border:0.4px solid #ccc"></div>
<div class="t" style="left:825.50px;top:270.60px;font-size:11.10px;color:#555;font-weight:normal;transform:scale(0.3333,0.3833) translate(-50%,-50%);-webkit-text-stroke:0.05px #555;">Legend</div>
<div class="a" style="left:377.00px;top:419.40px;width:552.00px;height:15.40px;background:linear-gradient(#6a6a6a 0,#6a6a6a 6%,#575757 7%,#555555 53%,#4a4a4a 54%,#3a3a3a)"></div>
<div class="a" style="left:504.50px;top:420.40px;width:24.50px;height:8.60px;background:linear-gradient(#f8f8f8,#e4e4e4);border-radius:0.8px"></div>
<div class="t" style="left:516.80px;top:425.00px;font-size:11.70px;color:#1a1a1a;font-weight:bold;transform:scale(0.3333,0.3833) translate(-50%,-50%);-webkit-text-stroke:0.35px #1a1a1a;">Final Voids</div>
<div class="t" style="left:388.50px;top:425.10px;font-size:11.55px;color:#d2d2d2;font-weight:normal;transform:scale(0.3333,0.3833) translate(-50%,-50%);-webkit-text-stroke:0.35px #d2d2d2;">Summary</div>
<div class="t" style="left:415.15px;top:425.10px;font-size:11.55px;color:#d2d2d2;font-weight:normal;transform:scale(0.3333,0.3833) translate(-50%,-50%);-webkit-text-stroke:0.35px #d2d2d2;">Loading Data</div>
<div class="t" style="left:445.05px;top:425.10px;font-size:11.55px;color:#d2d2d2;font-weight:normal;transform:scale(0.3333,0.3833) translate(-50%,-50%);-webkit-text-stroke:0.35px #d2d2d2;">Percent Strain</div>
<div class="t" style="left:481.50px;top:425.10px;font-size:11.55px;color:#d2d2d2;font-weight:normal;transform:scale(0.3333,0.3833) translate(-50%,-50%);-webkit-text-stroke:0.35px #d2d2d2;">Percent Strain (Log)</div>
<div class="t" style="left:556.65px;top:425.10px;font-size:11.55px;color:#d2d2d2;font-weight:normal;transform:scale(0.3333,0.3833) translate(-50%,-50%);-webkit-text-stroke:0.35px #d2d2d2;">Coefficients of Consolidation</div>
<div class="t" style="left:603.15px;top:425.10px;font-size:11.55px;color:#d2d2d2;font-weight:normal;transform:scale(0.3333,0.3833) translate(-50%,-50%);-webkit-text-stroke:0.35px #d2d2d2;">Height Change</div>
<div class="t" style="left:638.90px;top:425.10px;font-size:11.55px;color:#d2d2d2;font-weight:normal;transform:scale(0.3333,0.3833) translate(-50%,-50%);-webkit-text-stroke:0.35px #d2d2d2;">Square-Root Time</div>
<div class="a" style="left:377.00px;top:434.80px;width:552.00px;height:12.00px;background:#05294a"></div>
<div class="a" style="left:381.65px;top:438.00px;width:2.25px;height:2.15px;background:#f0f4f8"></div>
<div class="a" style="left:381.65px;top:440.85px;width:2.25px;height:2.15px;background:#f0f4f8"></div>
<div class="a" style="left:384.60px;top:438.00px;width:2.25px;height:2.15px;background:#f0f4f8"></div>
<div class="a" style="left:384.60px;top:440.85px;width:2.25px;height:2.15px;background:#f0f4f8"></div>
<div class="a" style="left:395.30px;top:438.00px;width:5.00px;height:5.00px;border:0.8px solid #e8eef4;border-radius:50%"></div>
<div class="a" style="left:408.90px;top:438.20px;width:6.00px;height:4.60px;border:0.8px solid #8898a8;border-radius:45%"></div>
<div class="t" style="left:426.60px;top:440.20px;font-size:27.00px;color:#2a8ae8;font-weight:bold;transform:scale(0.3333,0.3333) translate(-50%,-50%);-webkit-text-stroke:0.6px #2a8ae8;">e</div>
<div class="a" style="left:436.90px;top:437.70px;width:7.00px;height:5.60px;background:linear-gradient(#f8d878 0,#f8d878 60%,#60a8e0 60%);border-radius:0.5px"></div>
<div class="a" style="left:450.75px;top:437.70px;width:7.00px;height:5.60px;background:linear-gradient(90deg,#1a68c8 55%,#58a0e8 55%);border-radius:0.5px"></div>
<div class="t" style="left:453.05px;top:440.50px;font-size:10.50px;color:#fff;font-weight:bold;transform:scale(0.3333,0.3833) translate(-50%,-50%);-webkit-text-stroke:0.35px #fff;">O</div>
<div class="a" style="left:465.60px;top:437.50px;width:6.00px;height:6.00px;background:#8a3ac0;clip-path:polygon(0 25%,30% 50%,0 75%,20% 100%,100% 60%,100% 0,20% 0,0 25%)"></div>
<div class="a" style="left:467.60px;top:439.00px;width:3.00px;height:3.00px;background:#fff;clip-path:polygon(0 50%,100% 0,100% 100%)"></div>
<div class="a" style="left:479.90px;top:437.50px;width:5.60px;height:6.00px;background:linear-gradient(#f0a838,#d88818);border-radius:0.5px"></div>
<div class="t" style="left:483.00px;top:440.80px;font-size:12.00px;color:#5a3a10;font-weight:bold;transform:scale(0.3333,0.3833) translate(-50%,-50%);-webkit-text-stroke:0.35px #5a3a10;">d</div>
<div class="a" style="left:493.00px;top:437.50px;width:7.40px;height:6.00px;background:linear-gradient(#3ac040,#20a028)"></div>
<div class="a" style="left:493.00px;top:437.50px;width:1.70px;height:1.50px;background:#186818"></div>
<div class="a" style="left:420.80px;top:445.90px;width:11.60px;height:0.70px;background:#6aa0d0;opacity:0.8"></div>
<div class="a" style="left:434.60px;top:445.90px;width:11.60px;height:0.70px;background:#6aa0d0;opacity:0.8"></div>
<div class="a" style="left:448.45px;top:445.90px;width:11.60px;height:0.70px;background:#6aa0d0;opacity:0.8"></div>
<div class="a" style="left:462.80px;top:445.90px;width:11.60px;height:0.70px;background:#6aa0d0;opacity:0.8"></div>
<div class="a" style="left:476.90px;top:445.90px;width:11.60px;height:0.70px;background:#6aa0d0;opacity:0.8"></div>
<div class="a" style="left:490.90px;top:445.90px;width:11.60px;height:0.70px;background:#6aa0d0;opacity:0.8"></div>
<svg width="1024" height="474" viewBox="0 0 1024 474"><line x1="558.40" y1="189.0" x2="558.40" y2="367.8" stroke="#e2e2e2" stroke-width="0.6"/><line x1="571.95" y1="189.0" x2="571.95" y2="367.8" stroke="#ececec" stroke-width="0.6"/><line x1="579.87" y1="189.0" x2="579.87" y2="367.8" stroke="#ececec" stroke-width="0.6"/><line x1="585.49" y1="189.0" x2="585.49" y2="367.8" stroke="#ececec" stroke-width="0.6"/><line x1="589.85" y1="189.0" x2="589.85" y2="367.8" stroke="#ececec" stroke-width="0.6"/><line x1="593.42" y1="189.0" x2="593.42" y2="367.8" stroke="#ececec" stroke-width="0.6"/><line x1="596.43" y1="189.0" x2="596.43" y2="367.8" stroke="#ececec" stroke-width="0.6"/><line x1="599.04" y1="189.0" x2="599.04" y2="367.8" stroke="#ececec" stroke-width="0.6"/><line x1="601.34" y1="189.0" x2="601.34" y2="367.8" stroke="#ececec" stroke-width="0.6"/><line x1="603.40" y1="189.0" x2="603.40" y2="367.8" stroke="#e2e2e2" stroke-width="0.6"/><line x1="616.95" y1="189.0" x2="616.95" y2="367.8" stroke="#ececec" stroke-width="0.6"/><line x1="624.87" y1="189.0" x2="624.87" y2="367.8" stroke="#ececec" stroke-width="0.6"/><line x1="630.49" y1="189.0" x2="630.49" y2="367.8" stroke="#ececec" stroke-width="0.6"/><line x1="634.85" y1="189.0" x2="634.85" y2="367.8" stroke="#ececec" stroke-width="0.6"/><line x1="638.42" y1="189.0" x2="638.42" y2="367.8" stroke="#ececec" stroke-width="0.6"/><line x1="641.43" y1="189.0" x2="641.43" y2="367.8" stroke="#ececec" stroke-width="0.6"/><line x1="644.04" y1="189.0" x2="644.04" y2="367.8" stroke="#ececec" stroke-width="0.6"/><line x1="646.34" y1="189.0" x2="646.34" y2="367.8" stroke="#ececec" stroke-width="0.6"/><line x1="648.40" y1="189.0" x2="648.40" y2="367.8" stroke="#e2e2e2" stroke-width="0.6"/><line x1="661.95" y1="189.0" x2="661.95" y2="367.8" stroke="#ececec" stroke-width="0.6"/><line x1="669.87" y1="189.0" x2="669.87" y2="367.8" stroke="#ececec" stroke-width="0.6"/><line x1="675.49" y1="189.0" x2="675.49" y2="367.8" stroke="#ececec" stroke-width="0.6"/><line x1="679.85" y1="189.0" x2="679.85" y2="367.8" stroke="#ececec" stroke-width="0.6"/><line x1="683.42" y1="189.0" x2="683.42" y2="367.8" stroke="#ececec" stroke-width="0.6"/><line x1="686.43" y1="189.0" x2="686.43" y2="367.8" stroke="#ececec" stroke-width="0.6"/><line x1="689.04" y1="189.0" x2="689.04" y2="367.8" stroke="#ececec" stroke-width="0.6"/><line x1="691.34" y1="189.0" x2="691.34" y2="367.8" stroke="#ececec" stroke-width="0.6"/><line x1="693.40" y1="189.0" x2="693.40" y2="367.8" stroke="#e2e2e2" stroke-width="0.6"/><line x1="706.95" y1="189.0" x2="706.95" y2="367.8" stroke="#ececec" stroke-width="0.6"/><line x1="714.87" y1="189.0" x2="714.87" y2="367.8" stroke="#ececec" stroke-width="0.6"/><line x1="720.49" y1="189.0" x2="720.49" y2="367.8" stroke="#ececec" stroke-width="0.6"/><line x1="724.85" y1="189.0" x2="724.85" y2="367.8" stroke="#ececec" stroke-width="0.6"/><line x1="728.42" y1="189.0" x2="728.42" y2="367.8" stroke="#ececec" stroke-width="0.6"/><line x1="731.43" y1="189.0" x2="731.43" y2="367.8" stroke="#ececec" stroke-width="0.6"/><line x1="734.04" y1="189.0" x2="734.04" y2="367.8" stroke="#ececec" stroke-width="0.6"/><line x1="736.34" y1="189.0" x2="736.34" y2="367.8" stroke="#ececec" stroke-width="0.6"/><line x1="738.4" y1="189.0" x2="738.4" y2="367.8" stroke="#e2e2e2" stroke-width="0.6"/><line x1="558.4" y1="359.10" x2="738.4" y2="359.10" stroke="#e4e4e4" stroke-width="0.6"/><line x1="556.8" y1="359.10" x2="558.4" y2="359.10" stroke="#444" stroke-width="0.5"/><line x1="557.4" y1="368.03" x2="558.4" y2="368.03" stroke="#666" stroke-width="0.4"/><line x1="558.4" y1="341.25" x2="738.4" y2="341.25" stroke="#e4e4e4" stroke-width="0.6"/><line x1="556.8" y1="341.25" x2="558.4" y2="341.25" stroke="#444" stroke-width="0.5"/><line x1="557.4" y1="350.18" x2="558.4" y2="350.18" stroke="#666" stroke-width="0.4"/><line x1="558.4" y1="323.39" x2="738.4" y2="323.39" stroke="#e4e4e4" stroke-width="0.6"/><line x1="556.8" y1="323.39" x2="558.4" y2="323.39" stroke="#444" stroke-width="0.5"/><line x1="557.4" y1="332.32" x2="558.4" y2="332.32" stroke="#666" stroke-width="0.4"/><line x1="558.4" y1="305.54" x2="738.4" y2="305.54" stroke="#e4e4e4" stroke-width="0.6"/><line x1="556.8" y1="305.54" x2="558.4" y2="305.54" stroke="#444" stroke-width="0.5"/><line x1="557.4" y1="314.47" x2="558.4" y2="314.47" stroke="#666" stroke-width="0.4"/><line x1="558.4" y1="287.68" x2="738.4" y2="287.68" stroke="#e4e4e4" stroke-width="0.6"/><line x1="556.8" y1="287.68" x2="558.4" y2="287.68" stroke="#444" stroke-width="0.5"/><line x1="557.4" y1="296.61" x2="558.4" y2="296.61" stroke="#666" stroke-width="0.4"/><line x1="558.4" y1="269.82" x2="738.4" y2="269.82" stroke="#e4e4e4" stroke-width="0.6"/><line x1="556.8" y1="269.82" x2="558.4" y2="269.82" stroke="#444" stroke-width="0.5"/><line x1="557.4" y1="278.75" x2="558.4" y2="278.75" stroke="#666" stroke-width="0.4"/><line x1="558.4" y1="251.97" x2="738.4" y2="251.97" stroke="#e4e4e4" stroke-width="0.6"/><line x1="556.8" y1="251.97" x2="558.4" y2="251.97" stroke="#444" stroke-width="0.5"/><line x1="557.4" y1="260.90" x2="558.4" y2="260.90" stroke="#666" stroke-width="0.4"/><line x1="558.4" y1="234.11" x2="738.4" y2="234.11" stroke="#e4e4e4" stroke-width="0.6"/><line x1="556.8" y1="234.11" x2="558.4" y2="234.11" stroke="#444" stroke-width="0.5"/><line x1="557.4" y1="243.04" x2="558.4" y2="243.04" stroke="#666" stroke-width="0.4"/><line x1="558.4" y1="216.26" x2="738.4" y2="216.26" stroke="#e4e4e4" stroke-width="0.6"/><line x1="556.8" y1="216.26" x2="558.4" y2="216.26" stroke="#444" stroke-width="0.5"/><line x1="557.4" y1="225.19" x2="558.4" y2="225.19" stroke="#666" stroke-width="0.4"/><line x1="558.4" y1="198.40" x2="738.4" y2="198.40" stroke="#e4e4e4" stroke-width="0.6"/><line x1="556.8" y1="198.40" x2="558.4" y2="198.40" stroke="#444" stroke-width="0.5"/><line x1="557.4" y1="207.33" x2="558.4" y2="207.33" stroke="#666" stroke-width="0.4"/><line x1="558.40" y1="367.8" x2="558.40" y2="369.6" stroke="#444" stroke-width="0.5"/><line x1="571.95" y1="367.8" x2="571.95" y2="368.8" stroke="#444" stroke-width="0.5"/><line x1="579.87" y1="367.8" x2="579.87" y2="368.8" stroke="#444" stroke-width="0.5"/><line x1="585.49" y1="367.8" x2="585.49" y2="368.8" stroke="#444" stroke-width="0.5"/><line x1="589.85" y1="367.8" x2="589.85" y2="368.8" stroke="#444" stroke-width="0.5"/><line x1="593.42" y1="367.8" x2="593.42" y2="368.8" stroke="#444" stroke-width="0.5"/><line x1="596.43" y1="367.8" x2="596.43" y2="368.8" stroke="#444" stroke-width="0.5"/><line x1="599.04" y1="367.8" x2="599.04" y2="368.8" stroke="#444" stroke-width="0.5"/><line x1="601.34" y1="367.8" x2="601.34" y2="368.8" stroke="#444" stroke-width="0.5"/><line x1="603.40" y1="367.8" x2="603.40" y2="369.6" stroke="#444" stroke-width="0.5"/><line x1="616.95" y1="367.8" x2="616.95" y2="368.8" stroke="#444" stroke-width="0.5"/><line x1="624.87" y1="367.8" x2="624.87" y2="368.8" stroke="#444" stroke-width="0.5"/><line x1="630.49" y1="367.8" x2="630.49" y2="368.8" stroke="#444" stroke-width="0.5"/><line x1="634.85" y1="367.8" x2="634.85" y2="368.8" stroke="#444" stroke-width="0.5"/><line x1="638.42" y1="367.8" x2="638.42" y2="368.8" stroke="#444" stroke-width="0.5"/><line x1="641.43" y1="367.8" x2="641.43" y2="368.8" stroke="#444" stroke-width="0.5"/><line x1="644.04" y1="367.8" x2="644.04" y2="368.8" stroke="#444" stroke-width="0.5"/><line x1="646.34" y1="367.8" x2="646.34" y2="368.8" stroke="#444" stroke-width="0.5"/><line x1="648.40" y1="367.8" x2="648.40" y2="369.6" stroke="#444" stroke-width="0.5"/><line x1="661.95" y1="367.8" x2="661.95" y2="368.8" stroke="#444" stroke-width="0.5"/><line x1="669.87" y1="367.8" x2="669.87" y2="368.8" stroke="#444" stroke-width="0.5"/><line x1="675.49" y1="367.8" x2="675.49" y2="368.8" stroke="#444" stroke-width="0.5"/><line x1="679.85" y1="367.8" x2="679.85" y2="368.8" stroke="#444" stroke-width="0.5"/><line x1="683.42" y1="367.8" x2="683.42" y2="368.8" stroke="#444" stroke-width="0.5"/><line x1="686.43" y1="367.8" x2="686.43" y2="368.8" stroke="#444" stroke-width="0.5"/><line x1="689.04" y1="367.8" x2="689.04" y2="368.8" stroke="#444" stroke-width="0.5"/><line x1="691.34" y1="367.8" x2="691.34" y2="368.8" stroke="#444" stroke-width="0.5"/><line x1="693.40" y1="367.8" x2="693.40" y2="369.6" stroke="#444" stroke-width="0.5"/><line x1="706.95" y1="367.8" x2="706.95" y2="368.8" stroke="#444" stroke-width="0.5"/><line x1="714.87" y1="367.8" x2="714.87" y2="368.8" stroke="#444" stroke-width="0.5"/><line x1="720.49" y1="367.8" x2="720.49" y2="368.8" stroke="#444" stroke-width="0.5"/><line x1="724.85" y1="367.8" x2="724.85" y2="368.8" stroke="#444" stroke-width="0.5"/><line x1="728.42" y1="367.8" x2="728.42" y2="368.8" stroke="#444" stroke-width="0.5"/><line x1="731.43" y1="367.8" x2="731.43" y2="368.8" stroke="#444" stroke-width="0.5"/><line x1="734.04" y1="367.8" x2="734.04" y2="368.8" stroke="#444" stroke-width="0.5"/><line x1="736.34" y1="367.8" x2="736.34" y2="368.8" stroke="#444" stroke-width="0.5"/><line x1="738.4" y1="367.8" x2="738.4" y2="369.6" stroke="#444" stroke-width="0.5"/><line x1="558.4" y1="189.0" x2="558.4" y2="368.3" stroke="#333" stroke-width="0.9"/><line x1="558.4" y1="367.8" x2="738.4" y2="367.8" stroke="#333" stroke-width="0.9"/><polyline points="589.85,190.27 611.32,190.66 624.87,191.65 636.72,194.43 650.26,206.14 663.81,248.99 677.36,285.70 690.90,311.49 704.45,342.04 717.99,367.44" fill="none" stroke="#1f8a22" stroke-width="1.1"/><polyline points="717.99,367.44 704.45,367.44 677.36,360.29 650.26,349.38 624.87,342.44 589.85,335.49" fill="none" stroke="#1f8a22" stroke-width="1.1"/><circle cx="589.85" cy="190.27" r="1.0" fill="#1a6a1a"/><circle cx="611.32" cy="190.66" r="1.0" fill="#1a6a1a"/><circle cx="624.87" cy="191.65" r="1.0" fill="#1a6a1a"/><circle cx="636.72" cy="194.43" r="1.0" fill="#1a6a1a"/><circle cx="650.26" cy="206.14" r="1.0" fill="#1a6a1a"/><circle cx="663.81" cy="248.99" r="1.0" fill="#1a6a1a"/><circle cx="677.36" cy="285.70" r="1.0" fill="#1a6a1a"/><circle cx="690.90" cy="311.49" r="1.0" fill="#1a6a1a"/><circle cx="704.45" cy="342.04" r="1.0" fill="#1a6a1a"/><circle cx="717.99" cy="367.44" r="1.0" fill="#1a6a1a"/><circle cx="717.99" cy="367.44" r="1.0" fill="#1a6a1a"/><circle cx="704.45" cy="367.44" r="1.0" fill="#1a6a1a"/><circle cx="677.36" cy="360.29" r="1.0" fill="#1a6a1a"/><circle cx="650.26" cy="349.38" r="1.0" fill="#1a6a1a"/><circle cx="624.87" cy="342.44" r="1.0" fill="#1a6a1a"/><circle cx="589.85" cy="335.49" r="1.0" fill="#1a6a1a"/><line x1="637" y1="197.5" x2="650.5" y2="197.5" stroke="#30c0f0" stroke-width="0.9"/><line x1="637" y1="196.5" x2="650.5" y2="203.6" stroke="#4070e0" stroke-width="0.7"/><line x1="642.3" y1="190" x2="649.5" y2="208" stroke="#999" stroke-width="0.5" stroke-dasharray="1,0.8"/><circle cx="642.3" cy="190" r="1.0" fill="#e05a3a"/><circle cx="636.8" cy="194.6" r="0.9" fill="#8030a0"/><circle cx="650.3" cy="210.2" r="0.9" fill="#8030a0"/><circle cx="677.4" cy="285.8" r="0.9" fill="#b06030"/></svg>
<div class="t" style="left:554.80px;top:359.20px;font-size:10.80px;color:#505050;font-weight:normal;transform:scale(0.3333,0.3833) translate(-100%,-50%);-webkit-text-stroke:0.1px #505050;">0.09</div>
<div class="t" style="left:554.80px;top:341.35px;font-size:10.80px;color:#505050;font-weight:normal;transform:scale(0.3333,0.3833) translate(-100%,-50%);-webkit-text-stroke:0.1px #505050;">0.18</div>
<div class="t" style="left:554.80px;top:323.49px;font-size:10.80px;color:#505050;font-weight:normal;transform:scale(0.3333,0.3833) translate(-100%,-50%);-webkit-text-stroke:0.1px #505050;">0.27</div>
<div class="t" style="left:554.80px;top:305.64px;font-size:10.80px;color:#505050;font-weight:normal;transform:scale(0.3333,0.3833) translate(-100%,-50%);-webkit-text-stroke:0.1px #505050;">0.36</div>
<div class="t" style="left:554.80px;top:287.78px;font-size:10.80px;color:#505050;font-weight:normal;transform:scale(0.3333,0.3833) translate(-100%,-50%);-webkit-text-stroke:0.1px #505050;">0.45</div>
<div class="t" style="left:554.80px;top:269.92px;font-size:10.80px;color:#505050;font-weight:normal;transform:scale(0.3333,0.3833) translate(-100%,-50%);-webkit-text-stroke:0.1px #505050;">0.54</div>
<div class="t" style="left:554.80px;top:252.07px;font-size:10.80px;color:#505050;font-weight:normal;transform:scale(0.3333,0.3833) translate(-100%,-50%);-webkit-text-stroke:0.1px #505050;">0.63</div>
<div class="t" style="left:554.80px;top:234.21px;font-size:10.80px;color:#505050;font-weight:normal;transform:scale(0.3333,0.3833) translate(-100%,-50%);-webkit-text-stroke:0.1px #505050;">0.72</div>
<div class="t" style="left:554.80px;top:216.36px;font-size:10.80px;color:#505050;font-weight:normal;transform:scale(0.3333,0.3833) translate(-100%,-50%);-webkit-text-stroke:0.1px #505050;">0.81</div>
<div class="t" style="left:554.80px;top:198.50px;font-size:10.80px;color:#505050;font-weight:normal;transform:scale(0.3333,0.3833) translate(-100%,-50%);-webkit-text-stroke:0.1px #505050;">0.90</div>
<div class="t" style="left:560.00px;top:370.00px;font-size:10.8px;color:#505050;transform:rotate(45deg) scale(0.3333,0.3833);-webkit-text-stroke:0.1px #505050">0.010</div>
<div class="t" style="left:605.00px;top:370.00px;font-size:10.8px;color:#505050;transform:rotate(45deg) scale(0.3333,0.3833);-webkit-text-stroke:0.1px #505050">0.100</div>
<div class="t" style="left:650.00px;top:370.00px;font-size:10.8px;color:#505050;transform:rotate(45deg) scale(0.3333,0.3833);-webkit-text-stroke:0.1px #505050">1.000</div>
<div class="t" style="left:695.00px;top:370.00px;font-size:10.8px;color:#505050;transform:rotate(45deg) scale(0.3333,0.3833);-webkit-text-stroke:0.1px #505050">10.000</div>
<div class="t" style="left:740.00px;top:370.00px;font-size:10.8px;color:#505050;transform:rotate(45deg) scale(0.3333,0.3833);-webkit-text-stroke:0.1px #505050">100.000</div>
<div class="t" style="left:648.50px;top:387.30px;font-size:11.40px;color:#505050;font-weight:normal;transform:scale(0.3333,0.3833) translate(-50%,-50%);-webkit-text-stroke:0.1px #505050;">Pressure (ksf)</div>
<div class="t" style="left:545.8px;top:278.8px;font-size:11.1px;color:#505050;transform:rotate(-90deg) scale(0.3333,0.3833) translate(-50%,-50%);-webkit-text-stroke:0.1px #505050">Final Void Ratio, e (%)</div>
<div class="t" style="left:590.00px;top:194.10px;font-size:11.70px;color:#1a1a1a;font-weight:bold;transform:scale(0.3333,0.3833) translate(-50%,-50%);-webkit-text-stroke:0.35px #1a1a1a;font-style:italic">0.05 psf</div>
<div class="t" style="left:612.00px;top:194.10px;font-size:11.70px;color:#1a1a1a;font-weight:bold;transform:scale(0.3333,0.3833) translate(-50%,-50%);-webkit-text-stroke:0.35px #1a1a1a;font-style:italic">0.15psf</div>
<div class="t" style="left:633.50px;top:196.30px;font-size:11.70px;color:#1a1a1a;font-weight:bold;transform:scale(0.3333,0.3833) translate(-50%,-50%);-webkit-text-stroke:0.35px #1a1a1a;font-style:italic">0.55psf</div>
<div class="t" style="left:649.50px;top:214.30px;font-size:11.70px;color:#1a1a1a;font-weight:bold;transform:scale(0.3333,0.3833) translate(-50%,-50%);-webkit-text-stroke:0.35px #1a1a1a;font-style:italic">1.10 psf</div>
<div class="t" style="left:663.00px;top:253.90px;font-size:11.70px;color:#1a1a1a;font-weight:bold;transform:scale(0.3333,0.3833) translate(-50%,-50%);-webkit-text-stroke:0.35px #1a1a1a;font-style:italic">2.20 psf</div>
<div class="t" style="left:677.50px;top:289.50px;font-size:11.70px;color:#1a1a1a;font-weight:bold;transform:scale(0.3333,0.3833) translate(-50%,-50%);-webkit-text-stroke:0.35px #1a1a1a;font-style:italic">4.40 psf</div>
<div class="t" style="left:690.00px;top:315.50px;font-size:11.70px;color:#1a1a1a;font-weight:bold;transform:scale(0.3333,0.3833) translate(-50%,-50%);-webkit-text-stroke:0.35px #1a1a1a;font-style:italic">8.80 psf</div>
<div class="t" style="left:703.50px;top:345.50px;font-size:11.70px;color:#1a1a1a;font-weight:bold;transform:scale(0.3333,0.3833) translate(-50%,-50%);-webkit-text-stroke:0.35px #1a1a1a;font-style:italic">17.60 psf</div>
<div class="t" style="left:590.00px;top:338.70px;font-size:11.70px;color:#1a1a1a;font-weight:bold;transform:scale(0.3333,0.3833) translate(-50%,-50%);-webkit-text-stroke:0.35px #1a1a1a;font-style:italic">0.05 psf</div>
<div class="t" style="left:624.50px;top:346.50px;font-size:11.70px;color:#1a1a1a;font-weight:bold;transform:scale(0.3333,0.3833) translate(-50%,-50%);-webkit-text-stroke:0.35px #1a1a1a;font-style:italic">0.30 psf</div>
<div class="t" style="left:650.50px;top:353.50px;font-size:11.70px;color:#1a1a1a;font-weight:bold;transform:scale(0.3333,0.3833) translate(-50%,-50%);-webkit-text-stroke:0.35px #1a1a1a;font-style:italic">1.10 psf</div>
<div class="t" style="left:677.50px;top:361.90px;font-size:11.70px;color:#1a1a1a;font-weight:bold;transform:scale(0.3333,0.3833) translate(-50%,-50%);-webkit-text-stroke:0.35px #1a1a1a;font-style:italic">4.40 psf</div>
<div class="t" style="left:709.00px;top:187.80px;font-size:10.95px;color:#1a1a1a;font-weight:bold;transform:scale(0.3333,0.3833) translate(0,-50%);-webkit-text-stroke:0.35px #1a1a1a;font-style:italic">Preconsolidation Stress:</div>
<div class="t" style="left:709.00px;top:192.40px;font-size:10.95px;color:#1a1a1a;font-weight:bold;transform:scale(0.3333,0.3833) translate(0,-50%);-webkit-text-stroke:0.35px #1a1a1a;font-style:italic">0.00 psf</div>
<div class="t" style="left:789.50px;top:281.60px;font-size:11.10px;color:#4a4a4a;font-weight:normal;transform:scale(0.3333,0.3833) translate(0,-50%);-webkit-text-stroke:0.05px #4a4a4a;">(A) Stress Strain Curve</div>
<div class="t" style="left:789.50px;top:287.10px;font-size:11.10px;color:#4a4a4a;font-weight:normal;transform:scale(0.3333,0.3833) translate(0,-50%);-webkit-text-stroke:0.05px #4a4a4a;">(B) Point of Maximum Curvature</div>
<div class="t" style="left:789.50px;top:292.20px;font-size:11.10px;color:#4a4a4a;font-weight:normal;transform:scale(0.3333,0.3833) translate(0,-50%);-webkit-text-stroke:0.05px #4a4a4a;">(C) Tangent Line to Curve Intersecting at B</div>
<div class="t" style="left:789.50px;top:297.80px;font-size:11.10px;color:#4a4a4a;font-weight:normal;transform:scale(0.3333,0.3833) translate(0,-50%);-webkit-text-stroke:0.05px #4a4a4a;">(F) Tangent to Steepest Linear Portion of A</div>
<div class="t" style="left:789.50px;top:302.60px;font-size:11.10px;color:#4a4a4a;font-weight:normal;transform:scale(0.3333,0.3833) translate(0,-50%);-webkit-text-stroke:0.05px #4a4a4a;">(D) Horizontal Line Through B</div>
<div class="t" style="left:789.50px;top:308.20px;font-size:11.10px;color:#4a4a4a;font-weight:normal;transform:scale(0.3333,0.3833) translate(0,-50%);-webkit-text-stroke:0.05px #4a4a4a;">(E) Line Bisecting Angle Made by Lines C and D</div>
<svg width="1024" height="474"><line x1="777.4" y1="281.6" x2="788" y2="281.6" stroke="#1a8a1a" stroke-width="0.9"/><circle cx="782.7" cy="281.6" r="1.3" fill="#1a6a1a"/><line x1="777.4" y1="287.1" x2="788" y2="287.1" stroke="#909090" stroke-width="0.6" stroke-dasharray="1.8,1.1"/><circle cx="782.7" cy="287.1" r="1.05" fill="#f0a020"/><line x1="777.4" y1="292.2" x2="788" y2="292.2" stroke="#909090" stroke-width="0.6" stroke-dasharray="1.8,1.1"/><circle cx="782.7" cy="292.2" r="1.05" fill="#8030b0"/><line x1="777.4" y1="297.8" x2="788" y2="297.8" stroke="#909090" stroke-width="0.6" stroke-dasharray="1.8,1.1"/><circle cx="782.7" cy="297.8" r="1.05" fill="#c05030"/><line x1="777.4" y1="302.6" x2="788" y2="302.6" stroke="#30c0f0" stroke-width="0.9"/><line x1="777.4" y1="308.2" x2="788" y2="308.2" stroke="#5080e0" stroke-width="0.9"/></svg>
</div></body></html>
